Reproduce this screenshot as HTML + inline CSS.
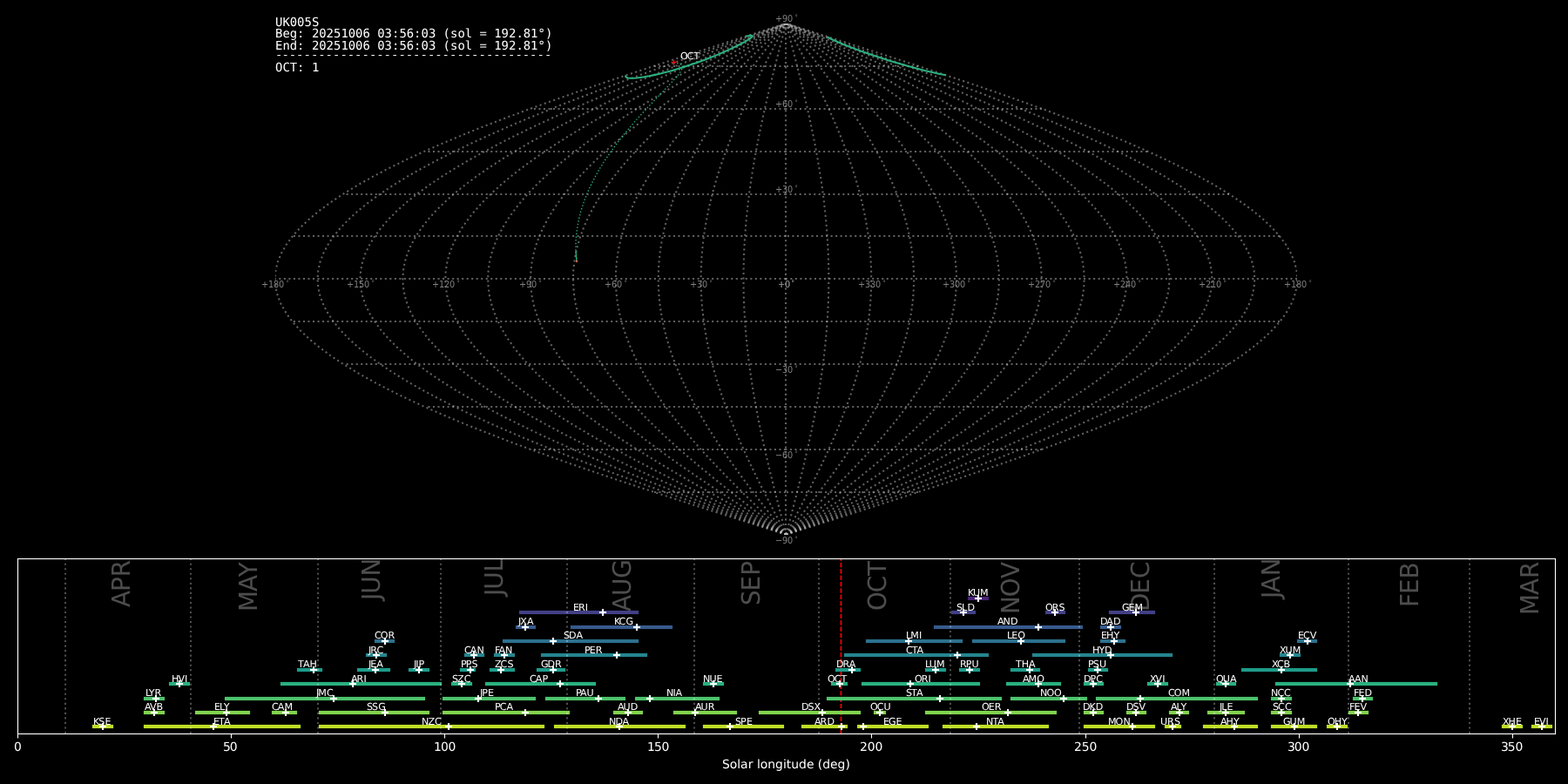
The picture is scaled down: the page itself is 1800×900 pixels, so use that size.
<!DOCTYPE html>
<html lang="en"><head><meta charset="utf-8"><title>UK005S shower association</title>
<style>html,body{margin:0;padding:0;background:#000;width:1800px;height:900px;overflow:hidden}svg{shape-rendering:geometricPrecision;text-rendering:geometricPrecision}</style></head>
<body>
<svg width="1800" height="900" viewBox="0 0 1800 900" style="display:block;background:#000;will-change:transform"><defs><clipPath id="c0"><rect x="316" y="27" width="1173" height="587"/></clipPath><clipPath id="c1"><rect x="20" y="641" width="1765" height="201"/></clipPath></defs>
<text transform="translate(149,697) rotate(-90) scale(1,1.0370)" x="0 18 34.75" y="0" font-family='"DejaVu Sans","Liberation Sans",sans-serif' font-size="27.78" fill="#ffffff" fill-opacity="0.3">APR</text>
<text transform="translate(295,700) rotate(-90) scale(1,1.0370)" x="-2 21 37.88" y="0" font-family='"DejaVu Sans","Liberation Sans",sans-serif' font-size="27.78" fill="#ffffff" fill-opacity="0.3">MAY</text>
<text transform="translate(436,691) rotate(-90) scale(1,1.0370)" x="2 9.25 29.5" y="0" font-family='"DejaVu Sans","Liberation Sans",sans-serif' font-size="27.78" fill="#ffffff" fill-opacity="0.3">JUN</text>
<text transform="translate(577,686) rotate(-90) scale(1,1.0370)" x="2 9.25 29.5" y="0" font-family='"DejaVu Sans","Liberation Sans",sans-serif' font-size="27.78" fill="#ffffff" fill-opacity="0.3">JUL</text>
<text transform="translate(724,702) rotate(-90) scale(1,1.0370)" x="0 18 38.25" y="0" font-family='"DejaVu Sans","Liberation Sans",sans-serif' font-size="27.78" fill="#ffffff" fill-opacity="0.3">AUG</text>
<text transform="translate(872,694) rotate(-90) scale(1,1.0370)" x="-1 15.62 33.25" y="0" font-family='"DejaVu Sans","Liberation Sans",sans-serif' font-size="27.78" fill="#ffffff" fill-opacity="0.3">SEP</text>
<text transform="translate(1017,700) rotate(-90) scale(1,1.0370)" x="-1 19.75 39.12" y="0" font-family='"DejaVu Sans","Liberation Sans",sans-serif' font-size="27.78" fill="#ffffff" fill-opacity="0.3">OCT</text>
<text transform="translate(1170,703) rotate(-90) scale(1,1.0370)" x="-2 17.75 39" y="0" font-family='"DejaVu Sans","Liberation Sans",sans-serif' font-size="27.78" fill="#ffffff" fill-opacity="0.3">NOV</text>
<text transform="translate(1319,700) rotate(-90) scale(1,1.0370)" x="-2 18.38 36" y="0" font-family='"DejaVu Sans","Liberation Sans",sans-serif' font-size="27.78" fill="#ffffff" fill-opacity="0.3">DEC</text>
<text transform="translate(1469,689) rotate(-90) scale(1,1.0370)" x="2 8.75 27.75" y="0" font-family='"DejaVu Sans","Liberation Sans",sans-serif' font-size="27.78" fill="#ffffff" fill-opacity="0.3">JAN</text>
<text transform="translate(1628,695) rotate(-90) scale(1,1.0370)" x="-2 13 30.62" y="0" font-family='"DejaVu Sans","Liberation Sans",sans-serif' font-size="27.78" fill="#ffffff" fill-opacity="0.3">FEB</text>
<text transform="translate(1766,704) rotate(-90) scale(1,1.0370)" x="-2 21 40" y="0" font-family='"DejaVu Sans","Liberation Sans",sans-serif' font-size="27.78" fill="#ffffff" fill-opacity="0.3">MAR</text>
<g clip-path="url(#c0)"><path d="M902 614L902 27" stroke="#c0c0c0" stroke-width="2.08" fill="none" stroke-opacity="0.5" stroke-dasharray="2.08 3.44"/>
<path d="M902.42 613.69L899.86 603.91L897.31 594.13L894.77 584.35L892.25 574.57L889.76 564.79L887.31 555.01L884.9 545.23L882.53 535.45L880.22 525.67L877.97 515.89L875.79 506.11L873.68 496.33L871.65 486.55L869.7 476.78L867.84 467L866.08 457.22L864.42 447.44L862.86 437.66L861.41 427.88L860.07 418.1L858.85 408.32L857.75 398.54L856.77 388.76L855.91 378.98L855.19 369.2L854.59 359.42L854.12 349.64L853.79 339.86L853.59 330.08L853.52 320.3L853.59 310.52L853.79 300.74L854.12 290.96L854.59 281.18L855.19 271.4L855.91 261.62L856.77 251.84L857.75 242.06L858.85 232.28L860.07 222.5L861.41 212.72L862.86 202.94L864.42 193.16L866.08 183.38L867.84 173.6L869.7 163.82L871.65 154.05L873.68 144.27L875.79 134.49L877.97 124.71L880.22 114.93L882.53 105.15L884.9 95.37L887.31 85.59L889.76 75.81L892.25 66.03L894.77 56.25L897.31 46.47L899.86 36.69L902.42 26.91" stroke="#c0c0c0" stroke-width="2.08" fill="none" stroke-opacity="0.5" stroke-dasharray="2.08 3.44" stroke-linejoin="round"/>
<path d="M902.42 613.69L897.3 603.91L892.2 594.13L887.12 584.35L882.09 574.57L877.11 564.79L872.2 555.01L867.37 545.23L862.64 535.45L858.02 525.67L853.52 515.89L849.16 506.11L844.94 496.33L840.87 486.55L836.98 476.78L833.27 467L829.74 457.22L826.42 447.44L823.3 437.66L820.4 427.88L817.73 418.1L815.28 408.32L813.08 398.54L811.12 388.76L809.41 378.98L807.96 369.2L806.76 359.42L805.83 349.64L805.16 339.86L804.76 330.08L804.62 320.3L804.76 310.52L805.16 300.74L805.83 290.96L806.76 281.18L807.96 271.4L809.41 261.62L811.12 251.84L813.08 242.06L815.28 232.28L817.73 222.5L820.4 212.72L823.3 202.94L826.42 193.16L829.74 183.38L833.27 173.6L836.98 163.82L840.87 154.05L844.94 144.27L849.16 134.49L853.52 124.71L858.02 114.93L862.64 105.15L867.37 95.37L872.2 85.59L877.11 75.81L882.09 66.03L887.12 56.25L892.2 46.47L897.3 36.69L902.42 26.91" stroke="#c0c0c0" stroke-width="2.08" fill="none" stroke-opacity="0.5" stroke-dasharray="2.08 3.44" stroke-linejoin="round"/>
<path d="M902.42 613.69L894.74 603.91L887.09 594.13L879.47 584.35L871.92 574.57L864.45 564.79L857.09 555.01L849.85 545.23L842.75 535.45L835.82 525.67L829.07 515.89L822.52 506.11L816.19 496.33L810.1 486.55L804.26 476.78L798.69 467L793.4 457.22L788.42 447.44L783.74 437.66L779.39 427.88L775.38 418.1L771.71 408.32L768.41 398.54L765.47 388.76L762.9 378.98L760.72 369.2L758.93 359.42L757.53 349.64L756.53 339.86L755.93 330.08L755.72 320.3L755.93 310.52L756.53 300.74L757.53 290.96L758.93 281.18L760.72 271.4L762.9 261.62L765.47 251.84L768.41 242.06L771.71 232.28L775.38 222.5L779.39 212.72L783.74 202.94L788.42 193.16L793.4 183.38L798.69 173.6L804.26 163.82L810.1 154.05L816.19 144.27L822.52 134.49L829.07 124.71L835.82 114.93L842.75 105.15L849.85 95.37L857.09 85.59L864.45 75.81L871.92 66.03L879.47 56.25L887.09 46.47L894.74 36.69L902.42 26.91" stroke="#c0c0c0" stroke-width="2.08" fill="none" stroke-opacity="0.5" stroke-dasharray="2.08 3.44" stroke-linejoin="round"/>
<path d="M902.42 613.69L892.18 603.91L881.97 594.13L871.82 584.35L861.75 574.57L851.8 564.79L841.98 555.01L832.33 545.23L822.86 535.45L813.62 525.67L804.62 515.89L795.89 506.11L787.45 496.33L779.33 486.55L771.54 476.78L764.11 467L757.07 457.22L750.41 447.44L744.18 437.66L738.38 427.88L733.03 418.1L728.14 408.32L723.74 398.54L719.82 388.76L716.4 378.98L713.49 369.2L711.1 359.42L709.23 349.64L707.9 339.86L707.09 330.08L706.83 320.3L707.09 310.52L707.9 300.74L709.23 290.96L711.1 281.18L713.49 271.4L716.4 261.62L719.82 251.84L723.74 242.06L728.14 232.28L733.03 222.5L738.38 212.72L744.18 202.94L750.41 193.16L757.07 183.38L764.11 173.6L771.54 163.82L779.33 154.05L787.45 144.27L795.89 134.49L804.62 124.71L813.62 114.93L822.86 105.15L832.33 95.37L841.98 85.59L851.8 75.81L861.75 66.03L871.82 56.25L881.97 46.47L892.18 36.69L902.42 26.91" stroke="#c0c0c0" stroke-width="2.08" fill="none" stroke-opacity="0.5" stroke-dasharray="2.08 3.44" stroke-linejoin="round"/>
<path d="M902.42 613.69L889.62 603.91L876.86 594.13L864.17 584.35L851.59 574.57L839.14 564.79L826.87 555.01L814.8 545.23L802.98 535.45L791.42 525.67L780.17 515.89L769.26 506.11L758.71 496.33L748.56 486.55L738.82 476.78L729.54 467L720.73 457.22L712.41 447.44L704.62 437.66L697.37 427.88L690.68 418.1L684.58 408.32L679.06 398.54L674.17 388.76L669.89 378.98L666.26 369.2L663.27 359.42L660.94 349.64L659.27 339.86L658.26 330.08L657.93 320.3L658.26 310.52L659.27 300.74L660.94 290.96L663.27 281.18L666.26 271.4L669.89 261.62L674.17 251.84L679.06 242.06L684.58 232.28L690.68 222.5L697.37 212.72L704.62 202.94L712.41 193.16L720.73 183.38L729.54 173.6L738.82 163.82L748.56 154.05L758.71 144.27L769.26 134.49L780.17 124.71L791.42 114.93L802.98 105.15L814.8 95.37L826.87 85.59L839.14 75.81L851.59 66.03L864.17 56.25L876.86 46.47L889.62 36.69L902.42 26.91" stroke="#c0c0c0" stroke-width="2.08" fill="none" stroke-opacity="0.5" stroke-dasharray="2.08 3.44" stroke-linejoin="round"/>
<path d="M902.42 613.69L887.07 603.91L871.75 594.13L856.52 584.35L841.42 574.57L826.48 564.79L811.76 555.01L797.28 545.23L783.09 535.45L769.22 525.67L755.72 515.89L742.63 506.11L729.97 496.33L717.78 486.55L706.1 476.78L694.96 467L684.39 457.22L674.41 447.44L665.06 437.66L656.36 427.88L648.34 418.1L641.01 408.32L634.39 398.54L628.52 388.76L623.39 378.98L619.03 369.2L615.44 359.42L612.64 349.64L610.64 339.86L609.43 330.08L609.03 320.3L609.43 310.52L610.64 300.74L612.64 290.96L615.44 281.18L619.03 271.4L623.39 261.62L628.52 251.84L634.39 242.06L641.01 232.28L648.34 222.5L656.36 212.72L665.06 202.94L674.41 193.16L684.39 183.38L694.96 173.6L706.1 163.82L717.78 154.05L729.97 144.27L742.63 134.49L755.72 124.71L769.22 114.93L783.09 105.15L797.28 95.37L811.76 85.59L826.48 75.81L841.42 66.03L856.52 56.25L871.75 46.47L887.07 36.69L902.42 26.91" stroke="#c0c0c0" stroke-width="2.08" fill="none" stroke-opacity="0.5" stroke-dasharray="2.08 3.44" stroke-linejoin="round"/>
<path d="M902.42 613.69L884.51 603.91L866.64 594.13L848.87 584.35L831.25 574.57L813.83 564.79L796.65 555.01L779.75 545.23L763.2 535.45L747.02 525.67L731.28 515.89L716 506.11L701.23 496.33L687.01 486.55L673.38 476.78L660.38 467L648.05 457.22L636.41 447.44L625.5 437.66L615.35 427.88L605.99 418.1L597.44 408.32L589.72 398.54L582.87 388.76L576.88 378.98L571.79 369.2L567.61 359.42L564.34 349.64L562.01 339.86L560.6 330.08L560.13 320.3L560.6 310.52L562.01 300.74L564.34 290.96L567.61 281.18L571.79 271.4L576.88 261.62L582.87 251.84L589.72 242.06L597.44 232.28L605.99 222.5L615.35 212.72L625.5 202.94L636.41 193.16L648.05 183.38L660.38 173.6L673.38 163.82L687.01 154.05L701.23 144.27L716 134.49L731.28 124.71L747.02 114.93L763.2 105.15L779.75 95.37L796.65 85.59L813.83 75.81L831.25 66.03L848.87 56.25L866.64 46.47L884.51 36.69L902.42 26.91" stroke="#c0c0c0" stroke-width="2.08" fill="none" stroke-opacity="0.5" stroke-dasharray="2.08 3.44" stroke-linejoin="round"/>
<path d="M902.42 613.69L881.95 603.91L861.53 594.13L841.22 584.35L821.09 574.57L801.17 564.79L781.54 555.01L762.23 545.23L743.31 535.45L724.82 525.67L706.83 515.89L689.36 506.11L672.49 496.33L656.24 486.55L640.66 476.78L625.81 467L611.71 457.22L598.41 447.44L585.94 437.66L574.34 427.88L563.64 418.1L553.87 408.32L545.05 398.54L537.21 388.76L530.38 378.98L524.56 369.2L519.78 359.42L516.05 349.64L513.37 339.86L511.77 330.08L511.23 320.3L511.77 310.52L513.37 300.74L516.05 290.96L519.78 281.18L524.56 271.4L530.38 261.62L537.21 251.84L545.05 242.06L553.87 232.28L563.64 222.5L574.34 212.72L585.94 202.94L598.41 193.16L611.71 183.38L625.81 173.6L640.66 163.82L656.24 154.05L672.49 144.27L689.36 134.49L706.83 124.71L724.82 114.93L743.31 105.15L762.23 95.37L781.54 85.59L801.17 75.81L821.09 66.03L841.22 56.25L861.53 46.47L881.95 36.69L902.42 26.91" stroke="#c0c0c0" stroke-width="2.08" fill="none" stroke-opacity="0.5" stroke-dasharray="2.08 3.44" stroke-linejoin="round"/>
<path d="M902.42 613.69L879.39 603.91L856.42 594.13L833.58 584.35L810.92 574.57L788.52 564.79L766.43 555.01L744.71 545.23L723.42 535.45L702.62 525.67L682.38 515.89L662.73 506.11L643.74 496.33L625.46 486.55L607.94 476.78L591.23 467L575.37 457.22L560.41 447.44L546.38 437.66L533.33 427.88L521.29 418.1L510.3 408.32L500.38 398.54L491.56 388.76L483.87 378.98L477.33 369.2L471.95 359.42L467.75 349.64L464.74 339.86L462.94 330.08L462.33 320.3L462.94 310.52L464.74 300.74L467.75 290.96L471.95 281.18L477.33 271.4L483.87 261.62L491.56 251.84L500.38 242.06L510.3 232.28L521.29 222.5L533.33 212.72L546.38 202.94L560.41 193.16L575.37 183.38L591.23 173.6L607.94 163.82L625.46 154.05L643.74 144.27L662.73 134.49L682.38 124.71L702.62 114.93L723.42 105.15L744.71 95.37L766.43 85.59L788.52 75.81L810.92 66.03L833.58 56.25L856.42 46.47L879.39 36.69L902.42 26.91" stroke="#c0c0c0" stroke-width="2.08" fill="none" stroke-opacity="0.5" stroke-dasharray="2.08 3.44" stroke-linejoin="round"/>
<path d="M902.42 613.69L876.83 603.91L851.31 594.13L825.93 584.35L800.75 574.57L775.86 564.79L751.32 555.01L727.18 545.23L703.53 535.45L680.43 525.67L657.93 515.89L636.1 506.11L615 496.33L594.69 486.55L575.23 476.78L556.66 467L539.03 457.22L522.41 447.44L506.82 437.66L492.32 427.88L478.95 418.1L466.73 408.32L455.71 398.54L445.91 388.76L437.37 378.98L430.1 369.2L424.12 359.42L419.46 349.64L416.11 339.86L414.11 330.08L413.43 320.3L414.11 310.52L416.11 300.74L419.46 290.96L424.12 281.18L430.1 271.4L437.37 261.62L445.91 251.84L455.71 242.06L466.73 232.28L478.95 222.5L492.32 212.72L506.82 202.94L522.41 193.16L539.03 183.38L556.66 173.6L575.23 163.82L594.69 154.05L615 144.27L636.1 134.49L657.93 124.71L680.43 114.93L703.53 105.15L727.18 95.37L751.32 85.59L775.86 75.81L800.75 66.03L825.93 56.25L851.31 46.47L876.83 36.69L902.42 26.91" stroke="#c0c0c0" stroke-width="2.08" fill="none" stroke-opacity="0.5" stroke-dasharray="2.08 3.44" stroke-linejoin="round"/>
<path d="M902.42 613.69L874.27 603.91L846.2 594.13L818.28 584.35L790.59 574.57L763.21 564.79L736.2 555.01L709.66 545.23L683.64 535.45L658.23 525.67L633.48 515.89L609.47 506.11L586.26 496.33L563.92 486.55L542.51 476.78L522.08 467L502.69 457.22L484.41 447.44L467.26 437.66L451.31 427.88L436.6 418.1L423.16 408.32L411.04 398.54L400.26 388.76L390.86 378.98L382.86 369.2L376.29 359.42L371.16 349.64L367.48 339.86L365.27 330.08L364.54 320.3L365.27 310.52L367.48 300.74L371.16 290.96L376.29 281.18L382.86 271.4L390.86 261.62L400.26 251.84L411.04 242.06L423.16 232.28L436.6 222.5L451.31 212.72L467.26 202.94L484.41 193.16L502.69 183.38L522.08 173.6L542.51 163.82L563.92 154.05L586.26 144.27L609.47 134.49L633.48 124.71L658.23 114.93L683.64 105.15L709.66 95.37L736.2 85.59L763.21 75.81L790.59 66.03L818.28 56.25L846.2 46.47L874.27 36.69L902.42 26.91" stroke="#c0c0c0" stroke-width="2.08" fill="none" stroke-opacity="0.5" stroke-dasharray="2.08 3.44" stroke-linejoin="round"/>
<path d="M902.42 613.69L871.71 603.91L841.08 594.13L810.63 584.35L780.42 574.57L750.55 564.79L721.09 555.01L692.14 545.23L663.75 535.45L636.03 525.67L609.03 515.89L582.84 506.11L557.52 496.33L533.15 486.55L509.79 476.78L487.5 467L466.36 457.22L446.4 447.44L427.7 437.66L410.3 427.88L394.25 418.1L379.59 408.32L366.37 398.54L354.61 388.76L344.36 378.98L335.63 369.2L328.46 359.42L322.86 349.64L318.85 339.86L316.44 330.08L315.64 320.3L316.44 310.52L318.85 300.74L322.86 290.96L328.46 281.18L335.63 271.4L344.36 261.62L354.61 251.84L366.37 242.06L379.59 232.28L394.25 222.5L410.3 212.72L427.7 202.94L446.4 193.16L466.36 183.38L487.5 173.6L509.79 163.82L533.15 154.05L557.52 144.27L582.84 134.49L609.03 124.71L636.03 114.93L663.75 105.15L692.14 95.37L721.09 85.59L750.55 75.81L780.42 66.03L810.63 56.25L841.08 46.47L871.71 36.69L902.42 26.91" stroke="#c0c0c0" stroke-width="2.08" fill="none" stroke-opacity="0.5" stroke-dasharray="2.08 3.44" stroke-linejoin="round"/>
<path d="M902.42 613.69L933.13 603.91L963.76 594.13L994.21 584.35L1024.42 574.57L1054.29 564.79L1083.75 555.01L1112.7 545.23L1141.09 535.45L1168.81 525.67L1195.81 515.89L1222 506.11L1247.32 496.33L1271.69 486.55L1295.05 476.78L1317.34 467L1338.48 457.22L1358.44 447.44L1377.14 437.66L1394.54 427.88L1410.59 418.1L1425.25 408.32L1438.47 398.54L1450.23 388.76L1460.48 378.98L1469.21 369.2L1476.38 359.42L1481.98 349.64L1485.99 339.86L1488.4 330.08L1489.2 320.3L1488.4 310.52L1485.99 300.74L1481.98 290.96L1476.38 281.18L1469.21 271.4L1460.48 261.62L1450.23 251.84L1438.47 242.06L1425.25 232.28L1410.59 222.5L1394.54 212.72L1377.14 202.94L1358.44 193.16L1338.48 183.38L1317.34 173.6L1295.05 163.82L1271.69 154.05L1247.32 144.27L1222 134.49L1195.81 124.71L1168.81 114.93L1141.09 105.15L1112.7 95.37L1083.75 85.59L1054.29 75.81L1024.42 66.03L994.21 56.25L963.76 46.47L933.13 36.69L902.42 26.91" stroke="#c0c0c0" stroke-width="2.08" fill="none" stroke-opacity="0.5" stroke-dasharray="2.08 3.44" stroke-linejoin="round"/>
<path d="M902.42 613.69L930.57 603.91L958.64 594.13L986.56 584.35L1014.25 574.57L1041.63 564.79L1068.64 555.01L1095.18 545.23L1121.2 535.45L1146.61 525.67L1171.36 515.89L1195.37 506.11L1218.58 496.33L1240.92 486.55L1262.33 476.78L1282.76 467L1302.15 457.22L1320.43 447.44L1337.58 437.66L1353.53 427.88L1368.24 418.1L1381.68 408.32L1393.8 398.54L1404.58 388.76L1413.98 378.98L1421.98 369.2L1428.55 359.42L1433.68 349.64L1437.36 339.86L1439.57 330.08L1440.3 320.3L1439.57 310.52L1437.36 300.74L1433.68 290.96L1428.55 281.18L1421.98 271.4L1413.98 261.62L1404.58 251.84L1393.8 242.06L1381.68 232.28L1368.24 222.5L1353.53 212.72L1337.58 202.94L1320.43 193.16L1302.15 183.38L1282.76 173.6L1262.33 163.82L1240.92 154.05L1218.58 144.27L1195.37 134.49L1171.36 124.71L1146.61 114.93L1121.2 105.15L1095.18 95.37L1068.64 85.59L1041.63 75.81L1014.25 66.03L986.56 56.25L958.64 46.47L930.57 36.69L902.42 26.91" stroke="#c0c0c0" stroke-width="2.08" fill="none" stroke-opacity="0.5" stroke-dasharray="2.08 3.44" stroke-linejoin="round"/>
<path d="M902.42 613.69L928.01 603.91L953.53 594.13L978.91 584.35L1004.09 574.57L1028.98 564.79L1053.52 555.01L1077.66 545.23L1101.31 535.45L1124.41 525.67L1146.91 515.89L1168.74 506.11L1189.84 496.33L1210.15 486.55L1229.61 476.78L1248.18 467L1265.81 457.22L1282.43 447.44L1298.02 437.66L1312.52 427.88L1325.89 418.1L1338.11 408.32L1349.13 398.54L1358.93 388.76L1367.47 378.98L1374.74 369.2L1380.72 359.42L1385.38 349.64L1388.73 339.86L1390.73 330.08L1391.4 320.3L1390.73 310.52L1388.73 300.74L1385.38 290.96L1380.72 281.18L1374.74 271.4L1367.47 261.62L1358.93 251.84L1349.13 242.06L1338.11 232.28L1325.89 222.5L1312.52 212.72L1298.02 202.94L1282.43 193.16L1265.81 183.38L1248.18 173.6L1229.61 163.82L1210.15 154.05L1189.84 144.27L1168.74 134.49L1146.91 124.71L1124.41 114.93L1101.31 105.15L1077.66 95.37L1053.52 85.59L1028.98 75.81L1004.09 66.03L978.91 56.25L953.53 46.47L928.01 36.69L902.42 26.91" stroke="#c0c0c0" stroke-width="2.08" fill="none" stroke-opacity="0.5" stroke-dasharray="2.08 3.44" stroke-linejoin="round"/>
<path d="M902.42 613.69L925.45 603.91L948.42 594.13L971.26 584.35L993.92 574.57L1016.32 564.79L1038.41 555.01L1060.13 545.23L1081.42 535.45L1102.22 525.67L1122.46 515.89L1142.11 506.11L1161.1 496.33L1179.38 486.55L1196.9 476.78L1213.61 467L1229.47 457.22L1244.43 447.44L1258.46 437.66L1271.51 427.88L1283.55 418.1L1294.54 408.32L1304.46 398.54L1313.28 388.76L1320.97 378.98L1327.51 369.2L1332.89 359.42L1337.09 349.64L1340.1 339.86L1341.9 330.08L1342.51 320.3L1341.9 310.52L1340.1 300.74L1337.09 290.96L1332.89 281.18L1327.51 271.4L1320.97 261.62L1313.28 251.84L1304.46 242.06L1294.54 232.28L1283.55 222.5L1271.51 212.72L1258.46 202.94L1244.43 193.16L1229.47 183.38L1213.61 173.6L1196.9 163.82L1179.38 154.05L1161.1 144.27L1142.11 134.49L1122.46 124.71L1102.22 114.93L1081.42 105.15L1060.13 95.37L1038.41 85.59L1016.32 75.81L993.92 66.03L971.26 56.25L948.42 46.47L925.45 36.69L902.42 26.91" stroke="#c0c0c0" stroke-width="2.08" fill="none" stroke-opacity="0.5" stroke-dasharray="2.08 3.44" stroke-linejoin="round"/>
<path d="M902.42 613.69L922.89 603.91L943.31 594.13L963.62 584.35L983.75 574.57L1003.67 564.79L1023.3 555.01L1042.61 545.23L1061.53 535.45L1080.02 525.67L1098.01 515.89L1115.48 506.11L1132.35 496.33L1148.6 486.55L1164.18 476.78L1179.03 467L1193.13 457.22L1206.43 447.44L1218.9 437.66L1230.5 427.88L1241.2 418.1L1250.97 408.32L1259.79 398.54L1267.63 388.76L1274.46 378.98L1280.28 369.2L1285.06 359.42L1288.79 349.64L1291.47 339.86L1293.07 330.08L1293.61 320.3L1293.07 310.52L1291.47 300.74L1288.79 290.96L1285.06 281.18L1280.28 271.4L1274.46 261.62L1267.63 251.84L1259.79 242.06L1250.97 232.28L1241.2 222.5L1230.5 212.72L1218.9 202.94L1206.43 193.16L1193.13 183.38L1179.03 173.6L1164.18 163.82L1148.6 154.05L1132.35 144.27L1115.48 134.49L1098.01 124.71L1080.02 114.93L1061.53 105.15L1042.61 95.37L1023.3 85.59L1003.67 75.81L983.75 66.03L963.62 56.25L943.31 46.47L922.89 36.69L902.42 26.91" stroke="#c0c0c0" stroke-width="2.08" fill="none" stroke-opacity="0.5" stroke-dasharray="2.08 3.44" stroke-linejoin="round"/>
<path d="M902.42 613.69L920.33 603.91L938.2 594.13L955.97 584.35L973.59 574.57L991.01 564.79L1008.19 555.01L1025.09 545.23L1041.64 535.45L1057.82 525.67L1073.56 515.89L1088.84 506.11L1103.61 496.33L1117.83 486.55L1131.46 476.78L1144.46 467L1156.79 457.22L1168.43 447.44L1179.34 437.66L1189.49 427.88L1198.85 418.1L1207.4 408.32L1215.12 398.54L1221.97 388.76L1227.96 378.98L1233.05 369.2L1237.23 359.42L1240.5 349.64L1242.83 339.86L1244.24 330.08L1244.71 320.3L1244.24 310.52L1242.83 300.74L1240.5 290.96L1237.23 281.18L1233.05 271.4L1227.96 261.62L1221.97 251.84L1215.12 242.06L1207.4 232.28L1198.85 222.5L1189.49 212.72L1179.34 202.94L1168.43 193.16L1156.79 183.38L1144.46 173.6L1131.46 163.82L1117.83 154.05L1103.61 144.27L1088.84 134.49L1073.56 124.71L1057.82 114.93L1041.64 105.15L1025.09 95.37L1008.19 85.59L991.01 75.81L973.59 66.03L955.97 56.25L938.2 46.47L920.33 36.69L902.42 26.91" stroke="#c0c0c0" stroke-width="2.08" fill="none" stroke-opacity="0.5" stroke-dasharray="2.08 3.44" stroke-linejoin="round"/>
<path d="M902.42 613.69L917.77 603.91L933.09 594.13L948.32 584.35L963.42 574.57L978.36 564.79L993.08 555.01L1007.56 545.23L1021.75 535.45L1035.62 525.67L1049.12 515.89L1062.21 506.11L1074.87 496.33L1087.06 486.55L1098.74 476.78L1109.88 467L1120.45 457.22L1130.43 447.44L1139.78 437.66L1148.48 427.88L1156.5 418.1L1163.83 408.32L1170.45 398.54L1176.32 388.76L1181.45 378.98L1185.81 369.2L1189.4 359.42L1192.2 349.64L1194.2 339.86L1195.41 330.08L1195.81 320.3L1195.41 310.52L1194.2 300.74L1192.2 290.96L1189.4 281.18L1185.81 271.4L1181.45 261.62L1176.32 251.84L1170.45 242.06L1163.83 232.28L1156.5 222.5L1148.48 212.72L1139.78 202.94L1130.43 193.16L1120.45 183.38L1109.88 173.6L1098.74 163.82L1087.06 154.05L1074.87 144.27L1062.21 134.49L1049.12 124.71L1035.62 114.93L1021.75 105.15L1007.56 95.37L993.08 85.59L978.36 75.81L963.42 66.03L948.32 56.25L933.09 46.47L917.77 36.69L902.42 26.91" stroke="#c0c0c0" stroke-width="2.08" fill="none" stroke-opacity="0.5" stroke-dasharray="2.08 3.44" stroke-linejoin="round"/>
<path d="M902.42 613.69L915.22 603.91L927.98 594.13L940.67 584.35L953.25 574.57L965.7 564.79L977.97 555.01L990.04 545.23L1001.86 535.45L1013.42 525.67L1024.67 515.89L1035.58 506.11L1046.13 496.33L1056.28 486.55L1066.02 476.78L1075.3 467L1084.11 457.22L1092.43 447.44L1100.22 437.66L1107.47 427.88L1114.16 418.1L1120.26 408.32L1125.78 398.54L1130.67 388.76L1134.95 378.98L1138.58 369.2L1141.57 359.42L1143.9 349.64L1145.57 339.86L1146.58 330.08L1146.91 320.3L1146.58 310.52L1145.57 300.74L1143.9 290.96L1141.57 281.18L1138.58 271.4L1134.95 261.62L1130.67 251.84L1125.78 242.06L1120.26 232.28L1114.16 222.5L1107.47 212.72L1100.22 202.94L1092.43 193.16L1084.11 183.38L1075.3 173.6L1066.02 163.82L1056.28 154.05L1046.13 144.27L1035.58 134.49L1024.67 124.71L1013.42 114.93L1001.86 105.15L990.04 95.37L977.97 85.59L965.7 75.81L953.25 66.03L940.67 56.25L927.98 46.47L915.22 36.69L902.42 26.91" stroke="#c0c0c0" stroke-width="2.08" fill="none" stroke-opacity="0.5" stroke-dasharray="2.08 3.44" stroke-linejoin="round"/>
<path d="M902.42 613.69L912.66 603.91L922.87 594.13L933.02 584.35L943.09 574.57L953.04 564.79L962.86 555.01L972.51 545.23L981.98 535.45L991.22 525.67L1000.22 515.89L1008.95 506.11L1017.39 496.33L1025.51 486.55L1033.3 476.78L1040.73 467L1047.77 457.22L1054.43 447.44L1060.66 437.66L1066.46 427.88L1071.81 418.1L1076.7 408.32L1081.1 398.54L1085.02 388.76L1088.44 378.98L1091.35 369.2L1093.74 359.42L1095.61 349.64L1096.94 339.86L1097.75 330.08L1098.01 320.3L1097.75 310.52L1096.94 300.74L1095.61 290.96L1093.74 281.18L1091.35 271.4L1088.44 261.62L1085.02 251.84L1081.1 242.06L1076.7 232.28L1071.81 222.5L1066.46 212.72L1060.66 202.94L1054.43 193.16L1047.77 183.38L1040.73 173.6L1033.3 163.82L1025.51 154.05L1017.39 144.27L1008.95 134.49L1000.22 124.71L991.22 114.93L981.98 105.15L972.51 95.37L962.86 85.59L953.04 75.81L943.09 66.03L933.02 56.25L922.87 46.47L912.66 36.69L902.42 26.91" stroke="#c0c0c0" stroke-width="2.08" fill="none" stroke-opacity="0.5" stroke-dasharray="2.08 3.44" stroke-linejoin="round"/>
<path d="M902.42 613.69L910.1 603.91L917.75 594.13L925.37 584.35L932.92 574.57L940.39 564.79L947.75 555.01L954.99 545.23L962.09 535.45L969.02 525.67L975.77 515.89L982.32 506.11L988.65 496.33L994.74 486.55L1000.58 476.78L1006.15 467L1011.44 457.22L1016.42 447.44L1021.1 437.66L1025.45 427.88L1029.46 418.1L1033.13 408.32L1036.43 398.54L1039.37 388.76L1041.94 378.98L1044.12 369.2L1045.91 359.42L1047.31 349.64L1048.31 339.86L1048.91 330.08L1049.12 320.3L1048.91 310.52L1048.31 300.74L1047.31 290.96L1045.91 281.18L1044.12 271.4L1041.94 261.62L1039.37 251.84L1036.43 242.06L1033.13 232.28L1029.46 222.5L1025.45 212.72L1021.1 202.94L1016.42 193.16L1011.44 183.38L1006.15 173.6L1000.58 163.82L994.74 154.05L988.65 144.27L982.32 134.49L975.77 124.71L969.02 114.93L962.09 105.15L954.99 95.37L947.75 85.59L940.39 75.81L932.92 66.03L925.37 56.25L917.75 46.47L910.1 36.69L902.42 26.91" stroke="#c0c0c0" stroke-width="2.08" fill="none" stroke-opacity="0.5" stroke-dasharray="2.08 3.44" stroke-linejoin="round"/>
<path d="M902.42 613.69L907.54 603.91L912.64 594.13L917.72 584.35L922.75 574.57L927.73 564.79L932.64 555.01L937.47 545.23L942.2 535.45L946.82 525.67L951.32 515.89L955.68 506.11L959.9 496.33L963.97 486.55L967.86 476.78L971.57 467L975.1 457.22L978.42 447.44L981.54 437.66L984.44 427.88L987.11 418.1L989.56 408.32L991.76 398.54L993.72 388.76L995.43 378.98L996.88 369.2L998.08 359.42L999.01 349.64L999.68 339.86L1000.08 330.08L1000.22 320.3L1000.08 310.52L999.68 300.74L999.01 290.96L998.08 281.18L996.88 271.4L995.43 261.62L993.72 251.84L991.76 242.06L989.56 232.28L987.11 222.5L984.44 212.72L981.54 202.94L978.42 193.16L975.1 183.38L971.57 173.6L967.86 163.82L963.97 154.05L959.9 144.27L955.68 134.49L951.32 124.71L946.82 114.93L942.2 105.15L937.47 95.37L932.64 85.59L927.73 75.81L922.75 66.03L917.72 56.25L912.64 46.47L907.54 36.69L902.42 26.91" stroke="#c0c0c0" stroke-width="2.08" fill="none" stroke-opacity="0.5" stroke-dasharray="2.08 3.44" stroke-linejoin="round"/>
<path d="M902.42 613.69L904.98 603.91L907.53 594.13L910.07 584.35L912.59 574.57L915.08 564.79L917.53 555.01L919.94 545.23L922.31 535.45L924.62 525.67L926.87 515.89L929.05 506.11L931.16 496.33L933.19 486.55L935.14 476.78L937 467L938.76 457.22L940.42 447.44L941.98 437.66L943.43 427.88L944.77 418.1L945.99 408.32L947.09 398.54L948.07 388.76L948.93 378.98L949.65 369.2L950.25 359.42L950.72 349.64L951.05 339.86L951.25 330.08L951.32 320.3L951.25 310.52L951.05 300.74L950.72 290.96L950.25 281.18L949.65 271.4L948.93 261.62L948.07 251.84L947.09 242.06L945.99 232.28L944.77 222.5L943.43 212.72L941.98 202.94L940.42 193.16L938.76 183.38L937 173.6L935.14 163.82L933.19 154.05L931.16 144.27L929.05 134.49L926.87 124.71L924.62 114.93L922.31 105.15L919.94 95.37L917.53 85.59L915.08 75.81L912.59 66.03L910.07 56.25L907.53 46.47L904.98 36.69L902.42 26.91" stroke="#c0c0c0" stroke-width="2.08" fill="none" stroke-opacity="0.5" stroke-dasharray="2.08 3.44" stroke-linejoin="round"/>
<path d="M902 614L902 614" stroke="#c0c0c0" stroke-width="2.08" fill="none" stroke-opacity="0.5" stroke-dasharray="2.08 3.44"/>
<path d="M902 614L902 614" stroke="#c0c0c0" stroke-width="2.08" fill="none" stroke-opacity="0.5" stroke-dasharray="2.08 3.44"/>
<path d="M902 565L751 565" stroke="#c0c0c0" stroke-width="2.08" fill="none" stroke-opacity="0.5" stroke-dasharray="2.08 3.44"/>
<path d="M1054 565L902 565" stroke="#c0c0c0" stroke-width="2.08" fill="none" stroke-opacity="0.5" stroke-dasharray="2.08 3.44"/>
<path d="M902 516L609 516" stroke="#c0c0c0" stroke-width="2.08" fill="none" stroke-opacity="0.5" stroke-dasharray="2.08 3.44"/>
<path d="M1196 516L902 516" stroke="#c0c0c0" stroke-width="2.08" fill="none" stroke-opacity="0.5" stroke-dasharray="2.08 3.44"/>
<path d="M902 467L488 467" stroke="#c0c0c0" stroke-width="2.08" fill="none" stroke-opacity="0.5" stroke-dasharray="2.08 3.44"/>
<path d="M1317 467L902 467" stroke="#c0c0c0" stroke-width="2.08" fill="none" stroke-opacity="0.5" stroke-dasharray="2.08 3.44"/>
<path d="M902 418L394 418" stroke="#c0c0c0" stroke-width="2.08" fill="none" stroke-opacity="0.5" stroke-dasharray="2.08 3.44"/>
<path d="M1411 418L902 418" stroke="#c0c0c0" stroke-width="2.08" fill="none" stroke-opacity="0.5" stroke-dasharray="2.08 3.44"/>
<path d="M902 369L336 369" stroke="#c0c0c0" stroke-width="2.08" fill="none" stroke-opacity="0.5" stroke-dasharray="2.08 3.44"/>
<path d="M1469 369L902 369" stroke="#c0c0c0" stroke-width="2.08" fill="none" stroke-opacity="0.5" stroke-dasharray="2.08 3.44"/>
<path d="M902 320L316 320" stroke="#c0c0c0" stroke-width="2.08" fill="none" stroke-opacity="0.5" stroke-dasharray="2.08 3.44"/>
<path d="M1489 320L902 320" stroke="#c0c0c0" stroke-width="2.08" fill="none" stroke-opacity="0.5" stroke-dasharray="2.08 3.44"/>
<path d="M902 271L336 271" stroke="#c0c0c0" stroke-width="2.08" fill="none" stroke-opacity="0.5" stroke-dasharray="2.08 3.44"/>
<path d="M1469 271L902 271" stroke="#c0c0c0" stroke-width="2.08" fill="none" stroke-opacity="0.5" stroke-dasharray="2.08 3.44"/>
<path d="M902 223L394 223" stroke="#c0c0c0" stroke-width="2.08" fill="none" stroke-opacity="0.5" stroke-dasharray="2.08 3.44"/>
<path d="M1411 223L902 223" stroke="#c0c0c0" stroke-width="2.08" fill="none" stroke-opacity="0.5" stroke-dasharray="2.08 3.44"/>
<path d="M902 174L488 174" stroke="#c0c0c0" stroke-width="2.08" fill="none" stroke-opacity="0.5" stroke-dasharray="2.08 3.44"/>
<path d="M1317 174L902 174" stroke="#c0c0c0" stroke-width="2.08" fill="none" stroke-opacity="0.5" stroke-dasharray="2.08 3.44"/>
<path d="M902 125L609 125" stroke="#c0c0c0" stroke-width="2.08" fill="none" stroke-opacity="0.5" stroke-dasharray="2.08 3.44"/>
<path d="M1196 125L902 125" stroke="#c0c0c0" stroke-width="2.08" fill="none" stroke-opacity="0.5" stroke-dasharray="2.08 3.44"/>
<path d="M902 76L751 76" stroke="#c0c0c0" stroke-width="2.08" fill="none" stroke-opacity="0.5" stroke-dasharray="2.08 3.44"/>
<path d="M1054 76L902 76" stroke="#c0c0c0" stroke-width="2.08" fill="none" stroke-opacity="0.5" stroke-dasharray="2.08 3.44"/>
<path d="M902 27L902 27" stroke="#c0c0c0" stroke-width="2.08" fill="none" stroke-opacity="0.5" stroke-dasharray="2.08 3.44"/>
<path d="M902 27L902 27" stroke="#c0c0c0" stroke-width="2.08" fill="none" stroke-opacity="0.5" stroke-dasharray="2.08 3.44"/>
<path d="M773.4 72.5L775.97 72.53L778.13 72.7L779.9 73.03L781.3 73.5L782.33 74.11L783.03 74.86L783.42 75.73L783.51 76.73L783.35 77.85L782.94 79.07L782.31 80.39L781.49 81.8L780.49 83.3L779.33 84.89L778.03 86.54L776.61 88.26L775.07 90.04L773.44 91.88L771.72 93.77L769.93 95.71L768.07 97.69L766.15 99.72L764.18 101.77L762.17 103.87L760.13 105.99L758.05 108.15L755.95 110.33L753.83 112.53L751.7 114.76L749.55 117.01L747.4 119.27L745.24 121.56L743.08 123.86L740.92 126.18L738.76 128.51L736.61 130.86L734.47 133.21L732.34 135.58L730.22 137.97L728.11 140.36L726.02 142.76L723.95 145.17L721.9 147.59L719.86 150.01L717.85 152.45L715.86 154.89L713.9 157.34L711.95 159.79L710.04 162.25L708.15 164.72L706.29 167.19L704.46 169.66L702.66 172.15L700.89 174.63L699.15 177.12L697.44 179.61L695.76 182.11L694.12 184.61L692.51 187.12L690.94 189.63L689.4 192.14L687.9 194.65L686.43 197.17L685 199.69L683.61 202.21L682.26 204.74L680.94 207.26L679.66 209.79L678.42 212.32L677.22 214.86L676.07 217.39L674.95 219.93L673.87 222.47L672.83 225.01L671.84 227.55L670.89 230.1L669.97 232.64L669.1 235.19L668.28 237.74L667.49 240.29L666.75 242.84L666.06 245.39L665.4 247.94L664.79 250.5L664.23 253.05L663.71 255.61L663.23 258.16L662.8 260.72L662.41 263.28L662.06 265.84L661.76 268.4L661.51 270.96L661.3 273.52L661.14 276.08L661.02 278.65L660.95 281.21L660.92 283.77L660.94 286.34L661 288.9" stroke="#2ab07f" stroke-width="1.39" fill="none" stroke-dasharray="1.39 2.29" stroke-linejoin="round"/>
<rect x="770.5" y="70.806" width="6" height="1.389" fill="#ff0000"/><rect x="772.806" y="68.5" width="1.389" height="6" fill="#ff0000"/>
<path d="M862.15 40.93L857.47 41.46" stroke="#2ab07f" stroke-width="2.08" fill="none" stroke-linecap="square"/>
<path d="M950.68 42.95L954.9 45.15L960.73 47.8L967.64 50.72L975.32 53.78L983.51 56.9L992.08 60.02L1000.9 63.09L1009.86 66.08L1018.89 68.97L1027.89 71.73L1036.82 74.34L1045.58 76.79L1054.12 79.06L1062.38 81.14L1070.29 83.01L1077.8 84.68L1084.83 86.12" stroke="#2ab07f" stroke-width="2.08" fill="none" stroke-linecap="square" stroke-linejoin="round"/>
<path d="M718.27 87.34L718.39 88.31L719.31 89.05L721 89.55L723.43 89.79L726.56 89.79L730.33 89.55L734.71 89.05L739.65 88.31L745.1 87.34L751 86.12L757.31 84.68L763.97 83.01L770.92 81.14L778.12 79.06L785.5 76.79L793 74.34L800.57 71.73L808.16 68.97L815.68 66.08L823.08 63.09L830.29 60.02L837.22 56.9L843.78 53.78L849.84 50.72L855.21 47.8L859.63 45.15L862.69 42.95L863.76 41.46L862.15 40.93" stroke="#2ab07f" stroke-width="2.08" fill="none" stroke-linecap="square" stroke-linejoin="round"/></g>
<g clip-path="url(#c1)"><path d="M965.5 842.5L965.5 641.5" stroke="#ff0000" stroke-width="1.39" fill="none" stroke-dasharray="5.14 2.22"/>
<path d="M965.5 842.5L965.5 641.5" stroke="#ff0000" stroke-width="1.39" fill="none" stroke-dasharray="5.14 2.22"/></g>
<rect x="19.944" y="640.944" width="1.111" height="202.111" fill="#ffffff"/><rect x="1784.944" y="640.944" width="1.111" height="202.111" fill="#ffffff"/><rect x="19.944" y="841.944" width="1766.111" height="1.111" fill="#ffffff"/><rect x="19.944" y="640.944" width="1766.111" height="1.111" fill="#ffffff"/>
<text x="16" y="862" font-family='"DejaVu Sans","Liberation Sans",sans-serif' font-size="13.89" fill="#ffffff">0</text>
<text x="256 263.75" y="862" font-family='"DejaVu Sans","Liberation Sans",sans-serif' font-size="13.89" fill="#ffffff">50</text>
<text x="498 505.88 514.62" y="862" font-family='"DejaVu Sans","Liberation Sans",sans-serif' font-size="13.89" fill="#ffffff">100</text>
<text x="743 750.88 759.62" y="862" font-family='"DejaVu Sans","Liberation Sans",sans-serif' font-size="13.89" fill="#ffffff">150</text>
<text x="987 995.75 1004.5" y="862" font-family='"DejaVu Sans","Liberation Sans",sans-serif' font-size="13.89" fill="#ffffff">200</text>
<text x="1233 1241.75 1250.5" y="862" font-family='"DejaVu Sans","Liberation Sans",sans-serif' font-size="13.89" fill="#ffffff">250</text>
<text x="1478 1485.75 1494.5" y="862" font-family='"DejaVu Sans","Liberation Sans",sans-serif' font-size="13.89" fill="#ffffff">300</text>
<text x="1723 1730.75 1739.5" y="862" font-family='"DejaVu Sans","Liberation Sans",sans-serif' font-size="13.89" fill="#ffffff">350</text>
<rect x="19.944" y="842.5" width="1.111" height="5" fill="#ffffff"/><rect x="264.944" y="842.5" width="1.111" height="5" fill="#ffffff"/><rect x="509.944" y="842.5" width="1.111" height="5" fill="#ffffff"/><rect x="754.944" y="842.5" width="1.111" height="5" fill="#ffffff"/><rect x="999.944" y="842.5" width="1.111" height="5" fill="#ffffff"/><rect x="1245.944" y="842.5" width="1.111" height="5" fill="#ffffff"/><rect x="1490.944" y="842.5" width="1.111" height="5" fill="#ffffff"/><rect x="1735.944" y="842.5" width="1.111" height="5" fill="#ffffff"/>
<text x="829 837.75 846.25 850.12 858.75 864.5 868.88 872.75 881.25 890 898.88 902.75 908.25 917 925.88 934.38 938.75 944.25 953.12 961.62 970.5" y="882" font-family='"DejaVu Sans","Liberation Sans",sans-serif' font-size="13.89" fill="#ffffff">Solar longitude (deg)</text>
<g fill="#808080"><text transform="translate(0,624) scale(1,1.1280)" x="890 898 904" y="0" font-family='"DejaVu Sans","Liberation Sans",sans-serif' font-size="9.72">−90</text><text transform="translate(0,619) scale(1,1.1280)" x="912" y="0" font-family='"DejaVu Sans","Liberation Sans",sans-serif' font-size="6.81">∘</text></g>
<g fill="#808080"><text transform="translate(0,526) scale(1,1.1280)" x="890 898 904" y="0" font-family='"DejaVu Sans","Liberation Sans",sans-serif' font-size="9.72">−60</text><text transform="translate(0,521) scale(1,1.1280)" x="912" y="0" font-family='"DejaVu Sans","Liberation Sans",sans-serif' font-size="6.81">∘</text></g>
<g fill="#808080"><text transform="translate(0,428) scale(1,1.1280)" x="890 898 904" y="0" font-family='"DejaVu Sans","Liberation Sans",sans-serif' font-size="9.72">−30</text><text transform="translate(0,423) scale(1,1.1280)" x="912" y="0" font-family='"DejaVu Sans","Liberation Sans",sans-serif' font-size="6.81">∘</text></g>
<g fill="#808080"><text transform="translate(0,330) scale(1,1.1280)" x="893 901" y="0" font-family='"DejaVu Sans","Liberation Sans",sans-serif' font-size="9.72">+0</text><text transform="translate(0,325) scale(1,1.1280)" x="908" y="0" font-family='"DejaVu Sans","Liberation Sans",sans-serif' font-size="6.81">∘</text></g>
<g fill="#808080"><text transform="translate(0,221) scale(1,1.1280)" x="890 898 904" y="0" font-family='"DejaVu Sans","Liberation Sans",sans-serif' font-size="9.72">+30</text><text transform="translate(0,216) scale(1,1.1280)" x="912" y="0" font-family='"DejaVu Sans","Liberation Sans",sans-serif' font-size="6.81">∘</text></g>
<g fill="#808080"><text transform="translate(0,123) scale(1,1.1280)" x="890 898 904" y="0" font-family='"DejaVu Sans","Liberation Sans",sans-serif' font-size="9.72">+60</text><text transform="translate(0,118) scale(1,1.1280)" x="912" y="0" font-family='"DejaVu Sans","Liberation Sans",sans-serif' font-size="6.81">∘</text></g>
<g fill="#808080"><text transform="translate(0,25) scale(1,1.1280)" x="890 898 904" y="0" font-family='"DejaVu Sans","Liberation Sans",sans-serif' font-size="9.72">+90</text><text transform="translate(0,20) scale(1,1.1280)" x="912" y="0" font-family='"DejaVu Sans","Liberation Sans",sans-serif' font-size="6.81">∘</text></g>
<g fill="#808080"><text transform="translate(0,330) scale(1,1.1280)" x="893 901" y="0" font-family='"DejaVu Sans","Liberation Sans",sans-serif' font-size="9.72">+0</text><text transform="translate(0,325) scale(1,1.1280)" x="908" y="0" font-family='"DejaVu Sans","Liberation Sans",sans-serif' font-size="6.81">∘</text></g>
<g fill="#808080"><text transform="translate(0,330) scale(1,1.1280)" x="792 800 806" y="0" font-family='"DejaVu Sans","Liberation Sans",sans-serif' font-size="9.72">+30</text><text transform="translate(0,325) scale(1,1.1280)" x="814" y="0" font-family='"DejaVu Sans","Liberation Sans",sans-serif' font-size="6.81">∘</text></g>
<g fill="#808080"><text transform="translate(0,330) scale(1,1.1280)" x="694 702 708" y="0" font-family='"DejaVu Sans","Liberation Sans",sans-serif' font-size="9.72">+60</text><text transform="translate(0,325) scale(1,1.1280)" x="716" y="0" font-family='"DejaVu Sans","Liberation Sans",sans-serif' font-size="6.81">∘</text></g>
<g fill="#808080"><text transform="translate(0,330) scale(1,1.1280)" x="596 604 610" y="0" font-family='"DejaVu Sans","Liberation Sans",sans-serif' font-size="9.72">+90</text><text transform="translate(0,325) scale(1,1.1280)" x="618" y="0" font-family='"DejaVu Sans","Liberation Sans",sans-serif' font-size="6.81">∘</text></g>
<g fill="#808080"><text transform="translate(0,330) scale(1,1.1280)" x="496 504 510 516" y="0" font-family='"DejaVu Sans","Liberation Sans",sans-serif' font-size="9.72">+120</text><text transform="translate(0,325) scale(1,1.1280)" x="524" y="0" font-family='"DejaVu Sans","Liberation Sans",sans-serif' font-size="6.81">∘</text></g>
<g fill="#808080"><text transform="translate(0,330) scale(1,1.1280)" x="398 406 412 418" y="0" font-family='"DejaVu Sans","Liberation Sans",sans-serif' font-size="9.72">+150</text><text transform="translate(0,325) scale(1,1.1280)" x="426" y="0" font-family='"DejaVu Sans","Liberation Sans",sans-serif' font-size="6.81">∘</text></g>
<g fill="#808080"><text transform="translate(0,330) scale(1,1.1280)" x="300 308 314 320" y="0" font-family='"DejaVu Sans","Liberation Sans",sans-serif' font-size="9.72">+180</text><text transform="translate(0,325) scale(1,1.1280)" x="328" y="0" font-family='"DejaVu Sans","Liberation Sans",sans-serif' font-size="6.81">∘</text></g>
<g fill="#808080"><text transform="translate(0,330) scale(1,1.1280)" x="1474 1482 1488 1494" y="0" font-family='"DejaVu Sans","Liberation Sans",sans-serif' font-size="9.72">+180</text><text transform="translate(0,325) scale(1,1.1280)" x="1502" y="0" font-family='"DejaVu Sans","Liberation Sans",sans-serif' font-size="6.81">∘</text></g>
<g fill="#808080"><text transform="translate(0,330) scale(1,1.1280)" x="1376 1384 1390 1396" y="0" font-family='"DejaVu Sans","Liberation Sans",sans-serif' font-size="9.72">+210</text><text transform="translate(0,325) scale(1,1.1280)" x="1404" y="0" font-family='"DejaVu Sans","Liberation Sans",sans-serif' font-size="6.81">∘</text></g>
<g fill="#808080"><text transform="translate(0,330) scale(1,1.1280)" x="1278 1286 1292 1298" y="0" font-family='"DejaVu Sans","Liberation Sans",sans-serif' font-size="9.72">+240</text><text transform="translate(0,325) scale(1,1.1280)" x="1306" y="0" font-family='"DejaVu Sans","Liberation Sans",sans-serif' font-size="6.81">∘</text></g>
<g fill="#808080"><text transform="translate(0,330) scale(1,1.1280)" x="1180 1188 1194 1200" y="0" font-family='"DejaVu Sans","Liberation Sans",sans-serif' font-size="9.72">+270</text><text transform="translate(0,325) scale(1,1.1280)" x="1208" y="0" font-family='"DejaVu Sans","Liberation Sans",sans-serif' font-size="6.81">∘</text></g>
<g fill="#808080"><text transform="translate(0,330) scale(1,1.1280)" x="1082 1090 1096 1102" y="0" font-family='"DejaVu Sans","Liberation Sans",sans-serif' font-size="9.72">+300</text><text transform="translate(0,325) scale(1,1.1280)" x="1110" y="0" font-family='"DejaVu Sans","Liberation Sans",sans-serif' font-size="6.81">∘</text></g>
<g fill="#808080"><text transform="translate(0,330) scale(1,1.1280)" x="985 993 999 1005" y="0" font-family='"DejaVu Sans","Liberation Sans",sans-serif' font-size="9.72">+330</text><text transform="translate(0,325) scale(1,1.1280)" x="1013" y="0" font-family='"DejaVu Sans","Liberation Sans",sans-serif' font-size="6.81">∘</text></g>
<text x="316 324.38 332.75 341.12 349.5 357.88" y="30" font-family='"DejaVu Sans Mono","Liberation Mono",monospace' font-size="13.89" fill="#ffffff">UK005S</text>
<text x="316 324.38 332.75 341.12 349.5 357.88 366.25 374.62 383 391.38 399.75 408.12 416.5 424.88 433.25 441.62 450 458.38 466.75 475.12 483.5 491.88 500.25 508.62 517 525.38 533.75 542.12 550.5 558.88 567.25 575.62 584 592.38 600.75 609.12 617.5 625.88" y="43" font-family='"DejaVu Sans Mono","Liberation Mono",monospace' font-size="13.89" fill="#ffffff">Beg: 20251006 03:56:03 (sol = 192.81°)</text>
<text x="316 324.38 332.75 341.12 349.5 357.88 366.25 374.62 383 391.38 399.75 408.12 416.5 424.88 433.25 441.62 450 458.38 466.75 475.12 483.5 491.88 500.25 508.62 517 525.38 533.75 542.12 550.5 558.88 567.25 575.62 584 592.38 600.75 609.12 617.5 625.88" y="56.5" font-family='"DejaVu Sans Mono","Liberation Mono",monospace' font-size="13.89" fill="#ffffff">End: 20251006 03:56:03 (sol = 192.81°)</text>
<text transform="translate(0,67) scale(1,0.9000)" x="316 323.38 331.75 340.12 348.5 356.88 365.25 373.62 382 390.38 398.75 407.12 415.5 423.88 432.25 440.62 449 457.38 465.75 474.12 482.5 490.88 499.25 507.62 516 524.38 532.75 541.12 549.5 557.88 566.25 574.62 583 591.38 599.75 608.12 616.5 624.88" y="0" font-family='"DejaVu Sans Mono","Liberation Mono",monospace' font-size="13.89" fill="#ffffff">--------------------------------------</text>
<text x="316 324.38 332.75 341.12 349.5 357.88" y="82" font-family='"DejaVu Sans Mono","Liberation Mono",monospace' font-size="13.89" fill="#ffffff">OCT: 1</text>
<g clip-path="url(#c1)"><rect x="105.917" y="831.917" width="24.167" height="4.167" fill="#bddf26"/></g>
<text x="107 113.25 120.38" y="832" font-family='"DejaVu Sans","Liberation Sans",sans-serif' font-size="11.11" fill="#ffffff">KSE</text>
<g clip-path="url(#c1)"><rect x="164.917" y="831.917" width="180.167" height="4.167" fill="#bddf26"/></g>
<text x="245 251 256.88" y="832" font-family='"DejaVu Sans","Liberation Sans",sans-serif' font-size="11.11" fill="#ffffff">ETA</text>
<g clip-path="url(#c1)"><rect x="365.917" y="831.917" width="259.167" height="4.167" fill="#bddf26"/></g>
<text x="484 491.38 499" y="832" font-family='"DejaVu Sans","Liberation Sans",sans-serif' font-size="11.11" fill="#ffffff">NZC</text>
<g clip-path="url(#c1)"><rect x="635.917" y="831.917" width="151.167" height="4.167" fill="#bddf26"/></g>
<text x="699 706.38 714.62" y="832" font-family='"DejaVu Sans","Liberation Sans",sans-serif' font-size="11.11" fill="#ffffff">NDA</text>
<g clip-path="url(#c1)"><rect x="806.917" y="831.917" width="93.167" height="4.167" fill="#bddf26"/></g>
<text x="844 850.12 856.88" y="832" font-family='"DejaVu Sans","Liberation Sans",sans-serif' font-size="11.11" fill="#ffffff">SPE</text>
<g clip-path="url(#c1)"><rect x="919.917" y="831.917" width="53.167" height="4.167" fill="#bddf26"/></g>
<text x="935 941.62 949.38" y="832" font-family='"DejaVu Sans","Liberation Sans",sans-serif' font-size="11.11" fill="#ffffff">ARD</text>
<g clip-path="url(#c1)"><rect x="983.917" y="831.917" width="82.167" height="4.167" fill="#bddf26"/></g>
<text x="1014 1020 1028.62" y="832" font-family='"DejaVu Sans","Liberation Sans",sans-serif' font-size="11.11" fill="#ffffff">EGE</text>
<g clip-path="url(#c1)"><rect x="1081.917" y="831.917" width="122.167" height="4.167" fill="#bddf26"/></g>
<text x="1132 1139.38 1145.25" y="832" font-family='"DejaVu Sans","Liberation Sans",sans-serif' font-size="11.11" fill="#ffffff">NTA</text>
<g clip-path="url(#c1)"><rect x="1243.917" y="831.917" width="82.167" height="4.167" fill="#bddf26"/></g>
<text x="1272 1280.62 1289.38" y="832" font-family='"DejaVu Sans","Liberation Sans",sans-serif' font-size="11.11" fill="#ffffff">MON</text>
<g clip-path="url(#c1)"><rect x="1336.917" y="831.917" width="19.167" height="4.167" fill="#bddf26"/></g>
<text x="1332 1340.12 1347.88" y="832" font-family='"DejaVu Sans","Liberation Sans",sans-serif' font-size="11.11" fill="#ffffff">URS</text>
<g clip-path="url(#c1)"><rect x="1380.917" y="831.917" width="63.167" height="4.167" fill="#bddf26"/></g>
<text x="1401 1407.62 1416" y="832" font-family='"DejaVu Sans","Liberation Sans",sans-serif' font-size="11.11" fill="#ffffff">AHY</text>
<g clip-path="url(#c1)"><rect x="1458.917" y="831.917" width="53.167" height="4.167" fill="#bddf26"/></g>
<text x="1473 1480.62 1488.75" y="832" font-family='"DejaVu Sans","Liberation Sans",sans-serif' font-size="11.11" fill="#ffffff">GUM</text>
<g clip-path="url(#c1)"><rect x="1522.917" y="831.917" width="24.167" height="4.167" fill="#bddf26"/></g>
<text x="1524 1531.75 1540.12" y="832" font-family='"DejaVu Sans","Liberation Sans",sans-serif' font-size="11.11" fill="#ffffff">OHY</text>
<g clip-path="url(#c1)"><rect x="1723.917" y="831.917" width="24.167" height="4.167" fill="#bddf26"/></g>
<text x="1725 1731.62 1740" y="832" font-family='"DejaVu Sans","Liberation Sans",sans-serif' font-size="11.11" fill="#ffffff">XHE</text>
<g clip-path="url(#c1)"><rect x="1757.917" y="831.917" width="24.167" height="4.167" fill="#bddf26"/></g>
<text x="1761 1767 1774.62" y="832" font-family='"DejaVu Sans","Liberation Sans",sans-serif' font-size="11.11" fill="#ffffff">EVI</text>
<g clip-path="url(#c1)"><rect x="164.917" y="815.917" width="24.167" height="4.167" fill="#81d34d"/></g>
<text x="166 171.88 179.5" y="815" font-family='"DejaVu Sans","Liberation Sans",sans-serif' font-size="11.11" fill="#ffffff">AVB</text>
<g clip-path="url(#c1)"><rect x="223.917" y="815.917" width="63.167" height="4.167" fill="#81d34d"/></g>
<text x="246 252 256.75" y="815" font-family='"DejaVu Sans","Liberation Sans",sans-serif' font-size="11.11" fill="#ffffff">ELY</text>
<g clip-path="url(#c1)"><rect x="311.917" y="815.917" width="29.167" height="4.167" fill="#81d34d"/></g>
<text x="312 318.75 326.38" y="815" font-family='"DejaVu Sans","Liberation Sans",sans-serif' font-size="11.11" fill="#ffffff">CAM</text>
<g clip-path="url(#c1)"><rect x="365.917" y="815.917" width="127.167" height="4.167" fill="#81d34d"/></g>
<text x="421 427.12 434.25" y="815" font-family='"DejaVu Sans","Liberation Sans",sans-serif' font-size="11.11" fill="#ffffff">SSG</text>
<g clip-path="url(#c1)"><rect x="507.917" y="815.917" width="146.167" height="4.167" fill="#81d34d"/></g>
<text x="568 573.75 581.5" y="815" font-family='"DejaVu Sans","Liberation Sans",sans-serif' font-size="11.11" fill="#ffffff">PCA</text>
<g clip-path="url(#c1)"><rect x="703.917" y="815.917" width="34.167" height="4.167" fill="#81d34d"/></g>
<text x="709 715.62 723.75" y="815" font-family='"DejaVu Sans","Liberation Sans",sans-serif' font-size="11.11" fill="#ffffff">AUD</text>
<g clip-path="url(#c1)"><rect x="772.917" y="815.917" width="73.167" height="4.167" fill="#81d34d"/></g>
<text x="798 804.62 812.75" y="815" font-family='"DejaVu Sans","Liberation Sans",sans-serif' font-size="11.11" fill="#ffffff">AUR</text>
<g clip-path="url(#c1)"><rect x="870.917" y="815.917" width="117.167" height="4.167" fill="#81d34d"/></g>
<text x="920 927.5 934.62" y="815" font-family='"DejaVu Sans","Liberation Sans",sans-serif' font-size="11.11" fill="#ffffff">DSX</text>
<g clip-path="url(#c1)"><rect x="1002.917" y="815.917" width="14.167" height="4.167" fill="#81d34d"/></g>
<text x="999 1006.75 1014.5" y="815" font-family='"DejaVu Sans","Liberation Sans",sans-serif' font-size="11.11" fill="#ffffff">OCU</text>
<g clip-path="url(#c1)"><rect x="1061.917" y="815.917" width="151.167" height="4.167" fill="#81d34d"/></g>
<text x="1127 1134.75 1141.75" y="815" font-family='"DejaVu Sans","Liberation Sans",sans-serif' font-size="11.11" fill="#ffffff">OER</text>
<g clip-path="url(#c1)"><rect x="1243.917" y="815.917" width="23.167" height="4.167" fill="#81d34d"/></g>
<text x="1243 1250.5 1257.75" y="815" font-family='"DejaVu Sans","Liberation Sans",sans-serif' font-size="11.11" fill="#ffffff">DKD</text>
<g clip-path="url(#c1)"><rect x="1292.917" y="815.917" width="23.167" height="4.167" fill="#81d34d"/></g>
<text x="1293 1300.5 1307.62" y="815" font-family='"DejaVu Sans","Liberation Sans",sans-serif' font-size="11.11" fill="#ffffff">DSV</text>
<g clip-path="url(#c1)"><rect x="1341.917" y="815.917" width="23.167" height="4.167" fill="#81d34d"/></g>
<text x="1344 1350.62 1355.38" y="815" font-family='"DejaVu Sans","Liberation Sans",sans-serif' font-size="11.11" fill="#ffffff">ALY</text>
<g clip-path="url(#c1)"><rect x="1385.917" y="815.917" width="43.167" height="4.167" fill="#81d34d"/></g>
<text x="1400 1402.25 1408.5" y="815" font-family='"DejaVu Sans","Liberation Sans",sans-serif' font-size="11.11" fill="#ffffff">JLE</text>
<g clip-path="url(#c1)"><rect x="1458.917" y="815.917" width="24.167" height="4.167" fill="#81d34d"/></g>
<text x="1461 1467.12 1474.88" y="815" font-family='"DejaVu Sans","Liberation Sans",sans-serif' font-size="11.11" fill="#ffffff">SCC</text>
<g clip-path="url(#c1)"><rect x="1547.917" y="815.917" width="23.167" height="4.167" fill="#81d34d"/></g>
<text x="1549 1554.38 1561.38" y="815" font-family='"DejaVu Sans","Liberation Sans",sans-serif' font-size="11.11" fill="#ffffff">FEV</text>
<g clip-path="url(#c1)"><rect x="164.917" y="799.917" width="24.167" height="4.167" fill="#4ec36b"/></g>
<text x="167 170.75 177.5" y="799" font-family='"DejaVu Sans","Liberation Sans",sans-serif' font-size="11.11" fill="#ffffff">LYR</text>
<g clip-path="url(#c1)"><rect x="257.917" y="799.917" width="230.167" height="4.167" fill="#4ec36b"/></g>
<text x="363 365.25 374.88" y="799" font-family='"DejaVu Sans","Liberation Sans",sans-serif' font-size="11.11" fill="#ffffff">JMC</text>
<g clip-path="url(#c1)"><rect x="507.917" y="799.917" width="107.167" height="4.167" fill="#4ec36b"/></g>
<text x="551 553.25 560" y="799" font-family='"DejaVu Sans","Liberation Sans",sans-serif' font-size="11.11" fill="#ffffff">JPE</text>
<g clip-path="url(#c1)"><rect x="625.917" y="799.917" width="92.167" height="4.167" fill="#4ec36b"/></g>
<text x="661 666 673.62" y="799" font-family='"DejaVu Sans","Liberation Sans",sans-serif' font-size="11.11" fill="#ffffff">PAU</text>
<g clip-path="url(#c1)"><rect x="728.917" y="799.917" width="97.167" height="4.167" fill="#4ec36b"/></g>
<text x="765 772.38 775.62" y="799" font-family='"DejaVu Sans","Liberation Sans",sans-serif' font-size="11.11" fill="#ffffff">NIA</text>
<g clip-path="url(#c1)"><rect x="948.917" y="799.917" width="201.167" height="4.167" fill="#4ec36b"/></g>
<text x="1040 1046.12 1052" y="799" font-family='"DejaVu Sans","Liberation Sans",sans-serif' font-size="11.11" fill="#ffffff">STA</text>
<g clip-path="url(#c1)"><rect x="1159.917" y="799.917" width="88.167" height="4.167" fill="#4ec36b"/></g>
<text x="1194 1201.38 1210.12" y="799" font-family='"DejaVu Sans","Liberation Sans",sans-serif' font-size="11.11" fill="#ffffff">NOO</text>
<g clip-path="url(#c1)"><rect x="1257.917" y="799.917" width="186.167" height="4.167" fill="#4ec36b"/></g>
<text x="1341 1347.75 1356.5" y="799" font-family='"DejaVu Sans","Liberation Sans",sans-serif' font-size="11.11" fill="#ffffff">COM</text>
<g clip-path="url(#c1)"><rect x="1458.917" y="799.917" width="24.167" height="4.167" fill="#4ec36b"/></g>
<text x="1459 1466.38 1474.12" y="799" font-family='"DejaVu Sans","Liberation Sans",sans-serif' font-size="11.11" fill="#ffffff">NCC</text>
<g clip-path="url(#c1)"><rect x="1552.917" y="799.917" width="23.167" height="4.167" fill="#4ec36b"/></g>
<text x="1554 1559.38 1566.38" y="799" font-family='"DejaVu Sans","Liberation Sans",sans-serif' font-size="11.11" fill="#ffffff">FED</text>
<g clip-path="url(#c1)"><rect x="193.917" y="782.917" width="24.167" height="4.167" fill="#2ab07f"/></g>
<text x="197 204.38 212" y="783" font-family='"DejaVu Sans","Liberation Sans",sans-serif' font-size="11.11" fill="#ffffff">HVI</text>
<g clip-path="url(#c1)"><rect x="321.917" y="782.917" width="185.167" height="4.167" fill="#2ab07f"/></g>
<text x="403 409.62 417.38" y="783" font-family='"DejaVu Sans","Liberation Sans",sans-serif' font-size="11.11" fill="#ffffff">ARI</text>
<g clip-path="url(#c1)"><rect x="517.917" y="782.917" width="24.167" height="4.167" fill="#2ab07f"/></g>
<text x="519 525.12 532.75" y="783" font-family='"DejaVu Sans","Liberation Sans",sans-serif' font-size="11.11" fill="#ffffff">SZC</text>
<g clip-path="url(#c1)"><rect x="556.917" y="782.917" width="127.167" height="4.167" fill="#2ab07f"/></g>
<text x="608 614.75 622.38" y="783" font-family='"DejaVu Sans","Liberation Sans",sans-serif' font-size="11.11" fill="#ffffff">CAP</text>
<g clip-path="url(#c1)"><rect x="806.917" y="782.917" width="24.167" height="4.167" fill="#2ab07f"/></g>
<text x="807 814.38 822.5" y="783" font-family='"DejaVu Sans","Liberation Sans",sans-serif' font-size="11.11" fill="#ffffff">NUE</text>
<g clip-path="url(#c1)"><rect x="953.917" y="782.917" width="19.167" height="4.167" fill="#2ab07f"/></g>
<text x="950 957.75 965.5" y="783" font-family='"DejaVu Sans","Liberation Sans",sans-serif' font-size="11.11" fill="#ffffff">OCT</text>
<g clip-path="url(#c1)"><rect x="988.917" y="782.917" width="136.167" height="4.167" fill="#2ab07f"/></g>
<text x="1050 1057.75 1065.5" y="783" font-family='"DejaVu Sans","Liberation Sans",sans-serif' font-size="11.11" fill="#ffffff">ORI</text>
<g clip-path="url(#c1)"><rect x="1154.917" y="782.917" width="63.167" height="4.167" fill="#2ab07f"/></g>
<text x="1174 1180.62 1190.25" y="783" font-family='"DejaVu Sans","Liberation Sans",sans-serif' font-size="11.11" fill="#ffffff">AMO</text>
<g clip-path="url(#c1)"><rect x="1243.917" y="782.917" width="23.167" height="4.167" fill="#2ab07f"/></g>
<text x="1244 1251.5 1258.25" y="783" font-family='"DejaVu Sans","Liberation Sans",sans-serif' font-size="11.11" fill="#ffffff">DPC</text>
<g clip-path="url(#c1)"><rect x="1316.917" y="782.917" width="24.167" height="4.167" fill="#2ab07f"/></g>
<text x="1320 1326.62 1334.25" y="783" font-family='"DejaVu Sans","Liberation Sans",sans-serif' font-size="11.11" fill="#ffffff">XVI</text>
<g clip-path="url(#c1)"><rect x="1395.917" y="782.917" width="23.167" height="4.167" fill="#2ab07f"/></g>
<text x="1396 1403.75 1411.88" y="783" font-family='"DejaVu Sans","Liberation Sans",sans-serif' font-size="11.11" fill="#ffffff">QUA</text>
<g clip-path="url(#c1)"><rect x="1463.917" y="782.917" width="186.167" height="4.167" fill="#2ab07f"/></g>
<text x="1548 1554.88 1562.5" y="783" font-family='"DejaVu Sans","Liberation Sans",sans-serif' font-size="11.11" fill="#ffffff">AAN</text>
<g clip-path="url(#c1)"><rect x="340.917" y="766.917" width="29.167" height="4.167" fill="#1e9b8a"/></g>
<text x="342 347.88 355.5" y="766" font-family='"DejaVu Sans","Liberation Sans",sans-serif' font-size="11.11" fill="#ffffff">TAH</text>
<g clip-path="url(#c1)"><rect x="409.917" y="766.917" width="38.167" height="4.167" fill="#1e9b8a"/></g>
<text x="423 425.25 432.25" y="766" font-family='"DejaVu Sans","Liberation Sans",sans-serif' font-size="11.11" fill="#ffffff">JEA</text>
<g clip-path="url(#c1)"><rect x="468.917" y="766.917" width="24.167" height="4.167" fill="#1e9b8a"/></g>
<text x="475 477.25 480.5" y="766" font-family='"DejaVu Sans","Liberation Sans",sans-serif' font-size="11.11" fill="#ffffff">JIP</text>
<g clip-path="url(#c1)"><rect x="527.917" y="766.917" width="18.167" height="4.167" fill="#1e9b8a"/></g>
<text x="529 534.75 541.5" y="766" font-family='"DejaVu Sans","Liberation Sans",sans-serif' font-size="11.11" fill="#ffffff">PPS</text>
<g clip-path="url(#c1)"><rect x="561.917" y="766.917" width="29.167" height="4.167" fill="#1e9b8a"/></g>
<text x="568 574.62 582.38" y="766" font-family='"DejaVu Sans","Liberation Sans",sans-serif' font-size="11.11" fill="#ffffff">ZCS</text>
<g clip-path="url(#c1)"><rect x="615.917" y="766.917" width="33.167" height="4.167" fill="#1e9b8a"/></g>
<text x="621 628.62 637.12" y="766" font-family='"DejaVu Sans","Liberation Sans",sans-serif' font-size="11.11" fill="#ffffff">GDR</text>
<g clip-path="url(#c1)"><rect x="958.917" y="766.917" width="29.167" height="4.167" fill="#1e9b8a"/></g>
<text x="960 967.5 974.75" y="766" font-family='"DejaVu Sans","Liberation Sans",sans-serif' font-size="11.11" fill="#ffffff">DRA</text>
<g clip-path="url(#c1)"><rect x="1061.917" y="766.917" width="24.167" height="4.167" fill="#1e9b8a"/></g>
<text x="1062 1066.75 1074.88" y="766" font-family='"DejaVu Sans","Liberation Sans",sans-serif' font-size="11.11" fill="#ffffff">LUM</text>
<g clip-path="url(#c1)"><rect x="1100.917" y="766.917" width="24.167" height="4.167" fill="#1e9b8a"/></g>
<text x="1102 1108.75 1115.5" y="766" font-family='"DejaVu Sans","Liberation Sans",sans-serif' font-size="11.11" fill="#ffffff">RPU</text>
<g clip-path="url(#c1)"><rect x="1159.917" y="766.917" width="34.167" height="4.167" fill="#1e9b8a"/></g>
<text x="1166 1172.75 1181.12" y="766" font-family='"DejaVu Sans","Liberation Sans",sans-serif' font-size="11.11" fill="#ffffff">THA</text>
<g clip-path="url(#c1)"><rect x="1248.917" y="766.917" width="23.167" height="4.167" fill="#1e9b8a"/></g>
<text x="1249 1254.75 1261.88" y="766" font-family='"DejaVu Sans","Liberation Sans",sans-serif' font-size="11.11" fill="#ffffff">PSU</text>
<g clip-path="url(#c1)"><rect x="1424.917" y="766.917" width="87.167" height="4.167" fill="#1e9b8a"/></g>
<text x="1460 1465.88 1473.62" y="766" font-family='"DejaVu Sans","Liberation Sans",sans-serif' font-size="11.11" fill="#ffffff">XCB</text>
<g clip-path="url(#c1)"><rect x="419.917" y="749.917" width="24.167" height="4.167" fill="#25858e"/></g>
<text x="423 425.25 432.5" y="750" font-family='"DejaVu Sans","Liberation Sans",sans-serif' font-size="11.11" fill="#ffffff">JRC</text>
<g clip-path="url(#c1)"><rect x="532.917" y="749.917" width="23.167" height="4.167" fill="#25858e"/></g>
<text x="533 539.75 547.38" y="750" font-family='"DejaVu Sans","Liberation Sans",sans-serif' font-size="11.11" fill="#ffffff">CAN</text>
<g clip-path="url(#c1)"><rect x="566.917" y="749.917" width="24.167" height="4.167" fill="#25858e"/></g>
<text x="568 572.38 580" y="750" font-family='"DejaVu Sans","Liberation Sans",sans-serif' font-size="11.11" fill="#ffffff">FAN</text>
<g clip-path="url(#c1)"><rect x="620.917" y="749.917" width="122.167" height="4.167" fill="#25858e"/></g>
<text x="671 676.75 683.75" y="750" font-family='"DejaVu Sans","Liberation Sans",sans-serif' font-size="11.11" fill="#ffffff">PER</text>
<g clip-path="url(#c1)"><rect x="968.917" y="749.917" width="166.167" height="4.167" fill="#25858e"/></g>
<text x="1040 1046.75 1052.62" y="750" font-family='"DejaVu Sans","Liberation Sans",sans-serif' font-size="11.11" fill="#ffffff">CTA</text>
<g clip-path="url(#c1)"><rect x="1184.917" y="749.917" width="161.167" height="4.167" fill="#25858e"/></g>
<text x="1254 1261.38 1268.12" y="750" font-family='"DejaVu Sans","Liberation Sans",sans-serif' font-size="11.11" fill="#ffffff">HYD</text>
<g clip-path="url(#c1)"><rect x="1468.917" y="749.917" width="24.167" height="4.167" fill="#25858e"/></g>
<text x="1469 1475.62 1483.75" y="750" font-family='"DejaVu Sans","Liberation Sans",sans-serif' font-size="11.11" fill="#ffffff">XUM</text>
<g clip-path="url(#c1)"><rect x="429.917" y="733.917" width="23.167" height="4.167" fill="#2d708e"/></g>
<text x="430 436.75 445.5" y="733" font-family='"DejaVu Sans","Liberation Sans",sans-serif' font-size="11.11" fill="#ffffff">COR</text>
<g clip-path="url(#c1)"><rect x="576.917" y="733.917" width="156.167" height="4.167" fill="#2d708e"/></g>
<text x="647 653.12 661.38" y="733" font-family='"DejaVu Sans","Liberation Sans",sans-serif' font-size="11.11" fill="#ffffff">SDA</text>
<g clip-path="url(#c1)"><rect x="993.917" y="733.917" width="111.167" height="4.167" fill="#2d708e"/></g>
<text x="1040 1045.25 1054.88" y="733" font-family='"DejaVu Sans","Liberation Sans",sans-serif' font-size="11.11" fill="#ffffff">LMI</text>
<g clip-path="url(#c1)"><rect x="1115.917" y="733.917" width="107.167" height="4.167" fill="#2d708e"/></g>
<text x="1156 1161.25 1168.25" y="733" font-family='"DejaVu Sans","Liberation Sans",sans-serif' font-size="11.11" fill="#ffffff">LEO</text>
<g clip-path="url(#c1)"><rect x="1262.917" y="733.917" width="29.167" height="4.167" fill="#2d708e"/></g>
<text x="1264 1270 1278.38" y="733" font-family='"DejaVu Sans","Liberation Sans",sans-serif' font-size="11.11" fill="#ffffff">EHY</text>
<g clip-path="url(#c1)"><rect x="1488.917" y="733.917" width="23.167" height="4.167" fill="#2d708e"/></g>
<text x="1490 1496 1503.75" y="733" font-family='"DejaVu Sans","Liberation Sans",sans-serif' font-size="11.11" fill="#ffffff">ECV</text>
<g clip-path="url(#c1)"><rect x="591.917" y="717.917" width="23.167" height="4.167" fill="#375a8c"/></g>
<text x="595 597.25 604.88" y="717" font-family='"DejaVu Sans","Liberation Sans",sans-serif' font-size="11.11" fill="#ffffff">JXA</text>
<g clip-path="url(#c1)"><rect x="654.917" y="717.917" width="117.167" height="4.167" fill="#375a8c"/></g>
<text x="705 710.62 718.38" y="717" font-family='"DejaVu Sans","Liberation Sans",sans-serif' font-size="11.11" fill="#ffffff">KCG</text>
<g clip-path="url(#c1)"><rect x="1071.917" y="717.917" width="171.167" height="4.167" fill="#375a8c"/></g>
<text x="1145 1151.62 1160" y="717" font-family='"DejaVu Sans","Liberation Sans",sans-serif' font-size="11.11" fill="#ffffff">AND</text>
<g clip-path="url(#c1)"><rect x="1262.917" y="717.917" width="24.167" height="4.167" fill="#375a8c"/></g>
<text x="1263 1270.25 1277.88" y="717" font-family='"DejaVu Sans","Liberation Sans",sans-serif' font-size="11.11" fill="#ffffff">DAD</text>
<g clip-path="url(#c1)"><rect x="595.917" y="700.917" width="137.167" height="4.167" fill="#424086"/></g>
<text x="658 664 671.75" y="701" font-family='"DejaVu Sans","Liberation Sans",sans-serif' font-size="11.11" fill="#ffffff">ERI</text>
<g clip-path="url(#c1)"><rect x="1091.917" y="700.917" width="28.167" height="4.167" fill="#424086"/></g>
<text x="1098 1104.12 1110.38" y="701" font-family='"DejaVu Sans","Liberation Sans",sans-serif' font-size="11.11" fill="#ffffff">SLD</text>
<g clip-path="url(#c1)"><rect x="1199.917" y="700.917" width="23.167" height="4.167" fill="#424086"/></g>
<text x="1200 1207.75 1215.5" y="701" font-family='"DejaVu Sans","Liberation Sans",sans-serif' font-size="11.11" fill="#ffffff">ORS</text>
<g clip-path="url(#c1)"><rect x="1272.917" y="700.917" width="53.167" height="4.167" fill="#424086"/></g>
<text x="1288 1295.62 1302.62" y="701" font-family='"DejaVu Sans","Liberation Sans",sans-serif' font-size="11.11" fill="#ffffff">GEM</text>
<g clip-path="url(#c1)"><rect x="1110.917" y="684.917" width="24.167" height="4.167" fill="#482475"/></g>
<text x="1111 1117 1125.12" y="684" font-family='"DejaVu Sans","Liberation Sans",sans-serif' font-size="11.11" fill="#ffffff">KUM</text>
<g clip-path="url(#c1)"><path d="M75 842L75 641" stroke="#ffffff" stroke-width="2.08" fill="none" stroke-opacity="0.3" stroke-dasharray="2.08 3.44"/>
<path d="M219 842L219 641" stroke="#ffffff" stroke-width="2.08" fill="none" stroke-opacity="0.3" stroke-dasharray="2.08 3.44"/>
<path d="M365 842L365 641" stroke="#ffffff" stroke-width="2.08" fill="none" stroke-opacity="0.3" stroke-dasharray="2.08 3.44"/>
<path d="M506 842L506 641" stroke="#ffffff" stroke-width="2.08" fill="none" stroke-opacity="0.3" stroke-dasharray="2.08 3.44"/>
<path d="M651 842L651 641" stroke="#ffffff" stroke-width="2.08" fill="none" stroke-opacity="0.3" stroke-dasharray="2.08 3.44"/>
<path d="M797 842L797 641" stroke="#ffffff" stroke-width="2.08" fill="none" stroke-opacity="0.3" stroke-dasharray="2.08 3.44"/>
<path d="M940 842L940 641" stroke="#ffffff" stroke-width="2.08" fill="none" stroke-opacity="0.3" stroke-dasharray="2.08 3.44"/>
<path d="M1091 842L1091 641" stroke="#ffffff" stroke-width="2.08" fill="none" stroke-opacity="0.3" stroke-dasharray="2.08 3.44"/>
<path d="M1239 842L1239 641" stroke="#ffffff" stroke-width="2.08" fill="none" stroke-opacity="0.3" stroke-dasharray="2.08 3.44"/>
<path d="M1394 842L1394 641" stroke="#ffffff" stroke-width="2.08" fill="none" stroke-opacity="0.3" stroke-dasharray="2.08 3.44"/>
<path d="M1548 842L1548 641" stroke="#ffffff" stroke-width="2.08" fill="none" stroke-opacity="0.3" stroke-dasharray="2.08 3.44"/>
<path d="M1687 842L1687 641" stroke="#ffffff" stroke-width="2.08" fill="none" stroke-opacity="0.3" stroke-dasharray="2.08 3.44"/></g>
<g clip-path="url(#c0)"><path d="M661 288.9L662 300" stroke="#2ab07f" stroke-width="1.39" fill="none" stroke-linecap="square"/></g>
<g clip-path="url(#c1)"><rect x="114" y="832.958" width="8" height="2.083" fill="#ffffff"/><rect x="116.958" y="830" width="2.083" height="8" fill="#ffffff"/>
<rect x="241" y="832.958" width="8" height="2.083" fill="#ffffff"/><rect x="243.958" y="830" width="2.083" height="8" fill="#ffffff"/>
<rect x="511" y="832.958" width="8" height="2.083" fill="#ffffff"/><rect x="513.958" y="830" width="2.083" height="8" fill="#ffffff"/>
<rect x="707" y="832.958" width="8" height="2.083" fill="#ffffff"/><rect x="709.958" y="830" width="2.083" height="8" fill="#ffffff"/>
<rect x="834" y="832.958" width="8" height="2.083" fill="#ffffff"/><rect x="836.958" y="830" width="2.083" height="8" fill="#ffffff"/>
<rect x="962" y="832.958" width="8" height="2.083" fill="#ffffff"/><rect x="964.958" y="830" width="2.083" height="8" fill="#ffffff"/>
<rect x="987" y="832.958" width="8" height="2.083" fill="#ffffff"/><rect x="989.958" y="830" width="2.083" height="8" fill="#ffffff"/>
<rect x="1117" y="832.958" width="8" height="2.083" fill="#ffffff"/><rect x="1119.958" y="830" width="2.083" height="8" fill="#ffffff"/>
<rect x="1296" y="832.958" width="8" height="2.083" fill="#ffffff"/><rect x="1298.958" y="830" width="2.083" height="8" fill="#ffffff"/>
<rect x="1342" y="832.958" width="8" height="2.083" fill="#ffffff"/><rect x="1344.958" y="830" width="2.083" height="8" fill="#ffffff"/>
<rect x="1413" y="832.958" width="8" height="2.083" fill="#ffffff"/><rect x="1415.958" y="830" width="2.083" height="8" fill="#ffffff"/>
<rect x="1482" y="832.958" width="8" height="2.083" fill="#ffffff"/><rect x="1484.958" y="830" width="2.083" height="8" fill="#ffffff"/>
<rect x="1531" y="832.958" width="8" height="2.083" fill="#ffffff"/><rect x="1533.958" y="830" width="2.083" height="8" fill="#ffffff"/>
<rect x="1732" y="832.958" width="8" height="2.083" fill="#ffffff"/><rect x="1734.958" y="830" width="2.083" height="8" fill="#ffffff"/>
<rect x="1766" y="832.958" width="8" height="2.083" fill="#ffffff"/><rect x="1768.958" y="830" width="2.083" height="8" fill="#ffffff"/>
<rect x="173" y="816.958" width="8" height="2.083" fill="#ffffff"/><rect x="175.958" y="814" width="2.083" height="8" fill="#ffffff"/>
<rect x="256" y="816.958" width="8" height="2.083" fill="#ffffff"/><rect x="258.958" y="814" width="2.083" height="8" fill="#ffffff"/>
<rect x="324" y="816.958" width="8" height="2.083" fill="#ffffff"/><rect x="326.958" y="814" width="2.083" height="8" fill="#ffffff"/>
<rect x="438" y="816.958" width="8" height="2.083" fill="#ffffff"/><rect x="440.958" y="814" width="2.083" height="8" fill="#ffffff"/>
<rect x="599" y="816.958" width="8" height="2.083" fill="#ffffff"/><rect x="601.958" y="814" width="2.083" height="8" fill="#ffffff"/>
<rect x="717" y="816.958" width="8" height="2.083" fill="#ffffff"/><rect x="719.958" y="814" width="2.083" height="8" fill="#ffffff"/>
<rect x="794" y="816.958" width="8" height="2.083" fill="#ffffff"/><rect x="796.958" y="814" width="2.083" height="8" fill="#ffffff"/>
<rect x="940" y="816.958" width="8" height="2.083" fill="#ffffff"/><rect x="942.958" y="814" width="2.083" height="8" fill="#ffffff"/>
<rect x="1006" y="816.958" width="8" height="2.083" fill="#ffffff"/><rect x="1008.958" y="814" width="2.083" height="8" fill="#ffffff"/>
<rect x="1153" y="816.958" width="8" height="2.083" fill="#ffffff"/><rect x="1155.958" y="814" width="2.083" height="8" fill="#ffffff"/>
<rect x="1251" y="816.958" width="8" height="2.083" fill="#ffffff"/><rect x="1253.958" y="814" width="2.083" height="8" fill="#ffffff"/>
<rect x="1300" y="816.958" width="8" height="2.083" fill="#ffffff"/><rect x="1302.958" y="814" width="2.083" height="8" fill="#ffffff"/>
<rect x="1350" y="816.958" width="8" height="2.083" fill="#ffffff"/><rect x="1352.958" y="814" width="2.083" height="8" fill="#ffffff"/>
<rect x="1403" y="816.958" width="8" height="2.083" fill="#ffffff"/><rect x="1405.958" y="814" width="2.083" height="8" fill="#ffffff"/>
<rect x="1467" y="816.958" width="8" height="2.083" fill="#ffffff"/><rect x="1469.958" y="814" width="2.083" height="8" fill="#ffffff"/>
<rect x="1555" y="816.958" width="8" height="2.083" fill="#ffffff"/><rect x="1557.958" y="814" width="2.083" height="8" fill="#ffffff"/>
<rect x="175" y="800.958" width="8" height="2.083" fill="#ffffff"/><rect x="177.958" y="798" width="2.083" height="8" fill="#ffffff"/>
<rect x="379" y="800.958" width="8" height="2.083" fill="#ffffff"/><rect x="381.958" y="798" width="2.083" height="8" fill="#ffffff"/>
<rect x="545" y="800.958" width="8" height="2.083" fill="#ffffff"/><rect x="547.958" y="798" width="2.083" height="8" fill="#ffffff"/>
<rect x="683" y="800.958" width="8" height="2.083" fill="#ffffff"/><rect x="685.958" y="798" width="2.083" height="8" fill="#ffffff"/>
<rect x="742" y="800.958" width="8" height="2.083" fill="#ffffff"/><rect x="744.958" y="798" width="2.083" height="8" fill="#ffffff"/>
<rect x="1075" y="800.958" width="8" height="2.083" fill="#ffffff"/><rect x="1077.958" y="798" width="2.083" height="8" fill="#ffffff"/>
<rect x="1217" y="800.958" width="8" height="2.083" fill="#ffffff"/><rect x="1219.958" y="798" width="2.083" height="8" fill="#ffffff"/>
<rect x="1305" y="800.958" width="8" height="2.083" fill="#ffffff"/><rect x="1307.958" y="798" width="2.083" height="8" fill="#ffffff"/>
<rect x="1467" y="800.958" width="8" height="2.083" fill="#ffffff"/><rect x="1469.958" y="798" width="2.083" height="8" fill="#ffffff"/>
<rect x="1560" y="800.958" width="8" height="2.083" fill="#ffffff"/><rect x="1562.958" y="798" width="2.083" height="8" fill="#ffffff"/>
<rect x="202" y="783.958" width="8" height="2.083" fill="#ffffff"/><rect x="204.958" y="781" width="2.083" height="8" fill="#ffffff"/>
<rect x="401" y="783.958" width="8" height="2.083" fill="#ffffff"/><rect x="403.958" y="781" width="2.083" height="8" fill="#ffffff"/>
<rect x="526" y="783.958" width="8" height="2.083" fill="#ffffff"/><rect x="528.958" y="781" width="2.083" height="8" fill="#ffffff"/>
<rect x="639" y="783.958" width="8" height="2.083" fill="#ffffff"/><rect x="641.958" y="781" width="2.083" height="8" fill="#ffffff"/>
<rect x="815" y="783.958" width="8" height="2.083" fill="#ffffff"/><rect x="817.958" y="781" width="2.083" height="8" fill="#ffffff"/>
<rect x="960" y="783.958" width="8" height="2.083" fill="#ffffff"/><rect x="962.958" y="781" width="2.083" height="8" fill="#ffffff"/>
<rect x="1041" y="783.958" width="8" height="2.083" fill="#ffffff"/><rect x="1043.958" y="781" width="2.083" height="8" fill="#ffffff"/>
<rect x="1188" y="783.958" width="8" height="2.083" fill="#ffffff"/><rect x="1190.958" y="781" width="2.083" height="8" fill="#ffffff"/>
<rect x="1251" y="783.958" width="8" height="2.083" fill="#ffffff"/><rect x="1253.958" y="781" width="2.083" height="8" fill="#ffffff"/>
<rect x="1325" y="783.958" width="8" height="2.083" fill="#ffffff"/><rect x="1327.958" y="781" width="2.083" height="8" fill="#ffffff"/>
<rect x="1403" y="783.958" width="8" height="2.083" fill="#ffffff"/><rect x="1405.958" y="781" width="2.083" height="8" fill="#ffffff"/>
<rect x="1546" y="783.958" width="8" height="2.083" fill="#ffffff"/><rect x="1548.958" y="781" width="2.083" height="8" fill="#ffffff"/>
<rect x="356" y="767.958" width="8" height="2.083" fill="#ffffff"/><rect x="358.958" y="765" width="2.083" height="8" fill="#ffffff"/>
<rect x="427" y="767.958" width="8" height="2.083" fill="#ffffff"/><rect x="429.958" y="765" width="2.083" height="8" fill="#ffffff"/>
<rect x="477" y="767.958" width="8" height="2.083" fill="#ffffff"/><rect x="479.958" y="765" width="2.083" height="8" fill="#ffffff"/>
<rect x="536" y="767.958" width="8" height="2.083" fill="#ffffff"/><rect x="538.958" y="765" width="2.083" height="8" fill="#ffffff"/>
<rect x="571" y="767.958" width="8" height="2.083" fill="#ffffff"/><rect x="573.958" y="765" width="2.083" height="8" fill="#ffffff"/>
<rect x="631" y="767.958" width="8" height="2.083" fill="#ffffff"/><rect x="633.958" y="765" width="2.083" height="8" fill="#ffffff"/>
<rect x="974" y="767.958" width="8" height="2.083" fill="#ffffff"/><rect x="976.958" y="765" width="2.083" height="8" fill="#ffffff"/>
<rect x="1070" y="767.958" width="8" height="2.083" fill="#ffffff"/><rect x="1072.958" y="765" width="2.083" height="8" fill="#ffffff"/>
<rect x="1109" y="767.958" width="8" height="2.083" fill="#ffffff"/><rect x="1111.958" y="765" width="2.083" height="8" fill="#ffffff"/>
<rect x="1178" y="767.958" width="8" height="2.083" fill="#ffffff"/><rect x="1180.958" y="765" width="2.083" height="8" fill="#ffffff"/>
<rect x="1256" y="767.958" width="8" height="2.083" fill="#ffffff"/><rect x="1258.958" y="765" width="2.083" height="8" fill="#ffffff"/>
<rect x="1467" y="767.958" width="8" height="2.083" fill="#ffffff"/><rect x="1469.958" y="765" width="2.083" height="8" fill="#ffffff"/>
<rect x="428" y="750.958" width="8" height="2.083" fill="#ffffff"/><rect x="430.958" y="748" width="2.083" height="8" fill="#ffffff"/>
<rect x="540" y="750.958" width="8" height="2.083" fill="#ffffff"/><rect x="542.958" y="748" width="2.083" height="8" fill="#ffffff"/>
<rect x="575" y="750.958" width="8" height="2.083" fill="#ffffff"/><rect x="577.958" y="748" width="2.083" height="8" fill="#ffffff"/>
<rect x="704" y="750.958" width="8" height="2.083" fill="#ffffff"/><rect x="706.958" y="748" width="2.083" height="8" fill="#ffffff"/>
<rect x="1095" y="750.958" width="8" height="2.083" fill="#ffffff"/><rect x="1097.958" y="748" width="2.083" height="8" fill="#ffffff"/>
<rect x="1271" y="750.958" width="8" height="2.083" fill="#ffffff"/><rect x="1273.958" y="748" width="2.083" height="8" fill="#ffffff"/>
<rect x="1477" y="750.958" width="8" height="2.083" fill="#ffffff"/><rect x="1479.958" y="748" width="2.083" height="8" fill="#ffffff"/>
<rect x="438" y="734.958" width="8" height="2.083" fill="#ffffff"/><rect x="440.958" y="732" width="2.083" height="8" fill="#ffffff"/>
<rect x="631" y="734.958" width="8" height="2.083" fill="#ffffff"/><rect x="633.958" y="732" width="2.083" height="8" fill="#ffffff"/>
<rect x="1039" y="734.958" width="8" height="2.083" fill="#ffffff"/><rect x="1041.958" y="732" width="2.083" height="8" fill="#ffffff"/>
<rect x="1168" y="734.958" width="8" height="2.083" fill="#ffffff"/><rect x="1170.958" y="732" width="2.083" height="8" fill="#ffffff"/>
<rect x="1275" y="734.958" width="8" height="2.083" fill="#ffffff"/><rect x="1277.958" y="732" width="2.083" height="8" fill="#ffffff"/>
<rect x="1497" y="734.958" width="8" height="2.083" fill="#ffffff"/><rect x="1499.958" y="732" width="2.083" height="8" fill="#ffffff"/>
<rect x="599" y="718.958" width="8" height="2.083" fill="#ffffff"/><rect x="601.958" y="716" width="2.083" height="8" fill="#ffffff"/>
<rect x="727" y="718.958" width="8" height="2.083" fill="#ffffff"/><rect x="729.958" y="716" width="2.083" height="8" fill="#ffffff"/>
<rect x="1188" y="718.958" width="8" height="2.083" fill="#ffffff"/><rect x="1190.958" y="716" width="2.083" height="8" fill="#ffffff"/>
<rect x="1271" y="718.958" width="8" height="2.083" fill="#ffffff"/><rect x="1273.958" y="716" width="2.083" height="8" fill="#ffffff"/>
<rect x="688" y="701.958" width="8" height="2.083" fill="#ffffff"/><rect x="690.958" y="699" width="2.083" height="8" fill="#ffffff"/>
<rect x="1102" y="701.958" width="8" height="2.083" fill="#ffffff"/><rect x="1104.958" y="699" width="2.083" height="8" fill="#ffffff"/>
<rect x="1207" y="701.958" width="8" height="2.083" fill="#ffffff"/><rect x="1209.958" y="699" width="2.083" height="8" fill="#ffffff"/>
<rect x="1300" y="701.958" width="8" height="2.083" fill="#ffffff"/><rect x="1302.958" y="699" width="2.083" height="8" fill="#ffffff"/>
<rect x="1119" y="685.958" width="8" height="2.083" fill="#ffffff"/><rect x="1121.958" y="683" width="2.083" height="8" fill="#ffffff"/></g>
<g clip-path="url(#c0)"><rect x="661" y="298.958" width="2" height="2.083" fill="#ff6347"/><rect x="660.958" y="299" width="2.083" height="2" fill="#ff6347"/></g>
<text x="781 788.75 796.5" y="68" font-family='"DejaVu Sans","Liberation Sans",sans-serif' font-size="11.11" fill="#ffffff">OCT</text>
</svg>
</body></html>
